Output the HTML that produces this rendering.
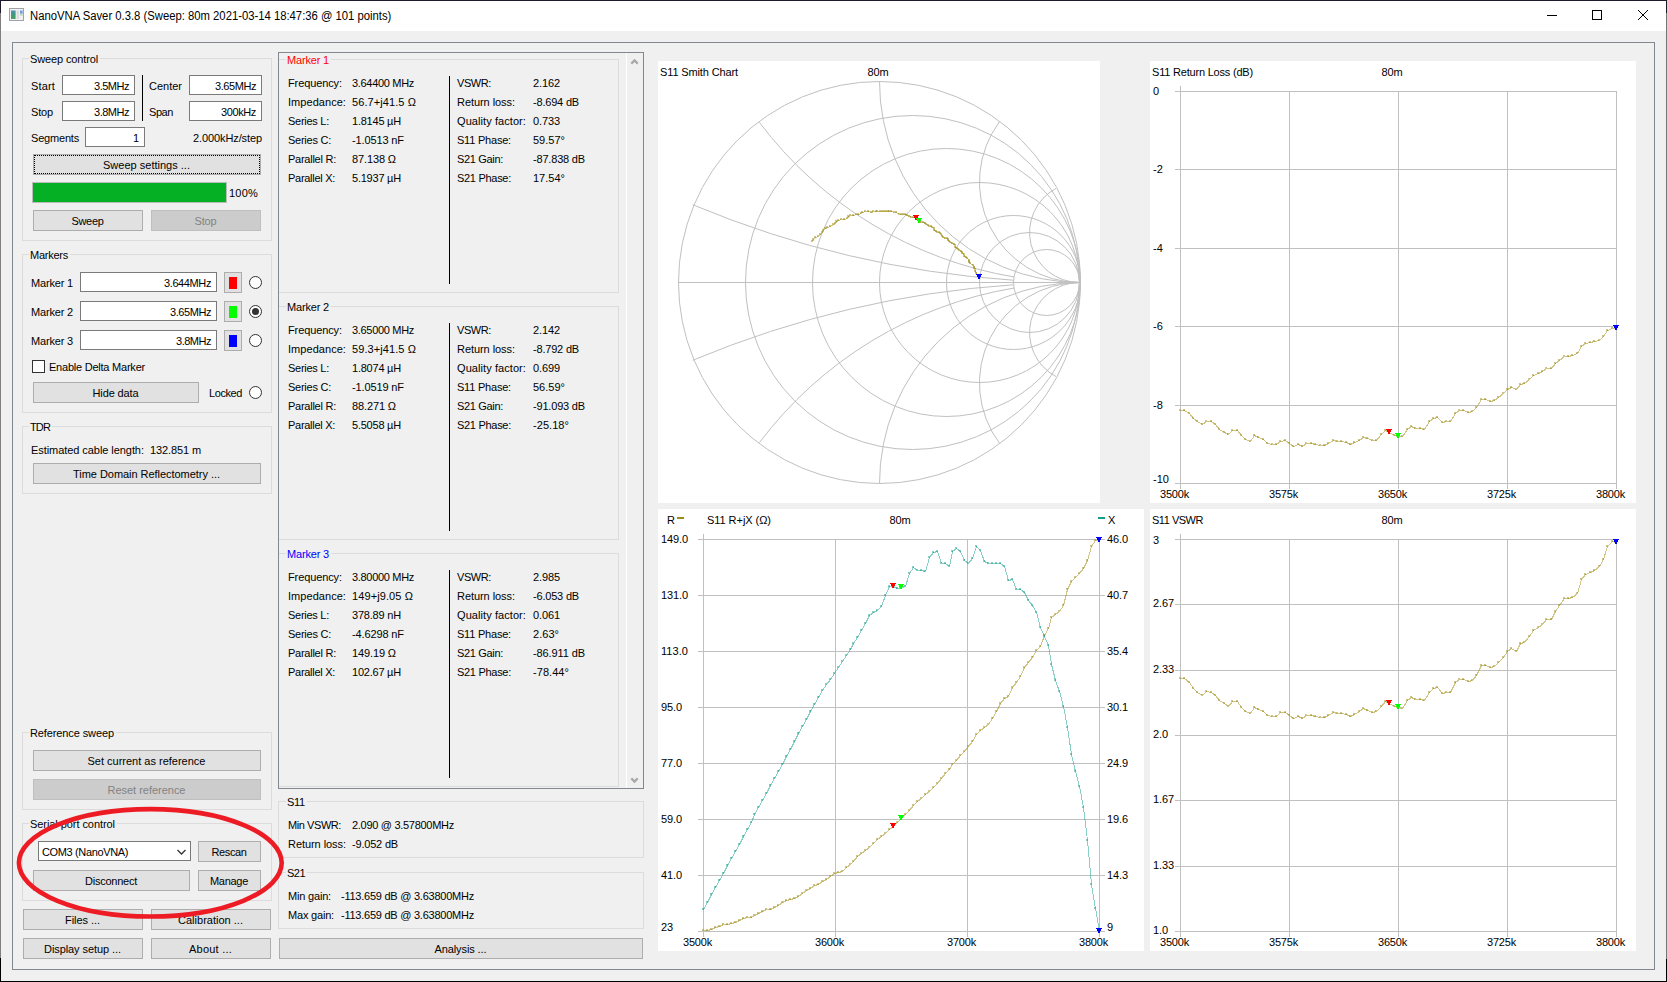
<!DOCTYPE html>
<html><head><meta charset="utf-8"><title>NanoVNA Saver</title><style>
html,body{margin:0;padding:0;}
body{width:1667px;height:982px;position:relative;overflow:hidden;background:#f0f0f0;font-family:'Liberation Sans',sans-serif;font-size:11px;color:#000;}
body div, body span, body svg{position:absolute;}
.t{line-height:14px;height:14px;white-space:pre;}
.gt{background:#f0f0f0;padding:0 2px 0 1px;}
.btn{box-sizing:border-box;text-align:center;white-space:pre;padding-right:1px;}
.inp{box-sizing:border-box;background:#fff;border:1px solid #7a7a7a;padding:0 5px 0 3px;white-space:pre;line-height:20px !important;}
.radio{width:13px;height:13px;box-sizing:border-box;border:1px solid #333;border-radius:50%;background:#fff;}
.radio i{position:absolute;left:2px;top:2px;width:7px;height:7px;border-radius:50%;background:#333;}
</style></head><body>
<div style="left:0px;top:0px;width:1667px;height:982px;background:#f0f0f0;"></div>
<div style="left:0px;top:1px;width:1667px;height:30px;background:#ffffff;"></div>
<div style="left:0px;top:0px;width:1667px;height:1px;background:#1b1b2b;"></div>
<div style="left:0px;top:0px;width:1px;height:958px;background:#7f7f7f;"></div>
<div style="left:0px;top:0px;width:1px;height:13px;background:#1b1b2b;"></div>
<div style="left:0px;top:958px;width:1px;height:24px;background:#000;"></div>
<div style="left:1666px;top:0px;width:1px;height:959px;background:#767676;"></div>
<div style="left:1666px;top:0px;width:1px;height:13px;background:#1b1b2b;"></div>
<div style="left:1666px;top:959px;width:1px;height:23px;background:#000;"></div>
<div style="left:0px;top:981px;width:1667px;height:1px;background:#000;"></div>
<svg style="left:9px;top:8px" width="15" height="13" viewBox="0 0 15 13"><defs><linearGradient id="ig" x1="0" y1="0" x2="0" y2="1"><stop offset="0" stop-color="#4f8fb0"/><stop offset="0.45" stop-color="#3f9a80"/><stop offset="1" stop-color="#4aa060"/></linearGradient></defs><rect x="0.5" y="0.5" width="14" height="12" fill="#f2f2f2" stroke="#9ea3ab"/><rect x="2" y="2.5" width="4.6" height="8.5" fill="url(#ig)"/><rect x="7.6" y="2.5" width="2.4" height="8.5" fill="#dcdcdc"/><rect x="11" y="2.5" width="2.6" height="3.2" fill="#6f9fd8"/><rect x="11" y="5.7" width="2.6" height="2" fill="#a8cfa8" opacity="0.7"/></svg>
<span class="t" style="left:30px;top:8px;font-size:12px;line-height:16px;transform-origin:0 0;transform:scaleX(0.94);">NanoVNA Saver 0.3.8 (Sweep: 80m 2021-03-14 18:47:36 @ 101 points)</span>
<svg style="left:1540px;top:0" width="127" height="31" viewBox="0 0 127 31" shape-rendering="crispEdges"><g stroke="#000" stroke-width="1" fill="none"><line x1="7" y1="15.5" x2="17" y2="15.5"/><rect x="52.5" y="10.5" width="9" height="9"/></g><g stroke="#000" stroke-width="1" shape-rendering="geometricPrecision"><line x1="98" y1="10" x2="108" y2="20"/><line x1="108" y1="10" x2="98" y2="20"/></g></svg>
<div style="left:12px;top:42px;width:1643px;height:928px;border:1px solid #828790;box-sizing:border-box;"></div>
<div style="left:22px;top:58px;width:250px;height:183px;border:1px solid #dcdcdc;box-sizing:border-box;"></div>
<span class="t gt" style="left:29px;top:52px;letter-spacing:-0.135px;">Sweep control</span>
<span class="t" style="top:79px;left:31px;letter-spacing:0.150px;">Start</span>
<div class="inp" style="left:62px;top:75px;width:73px;height:20px;line-height:20px;text-align:right;letter-spacing:-0.484px;">3.5MHz</div>
<span class="t" style="top:105px;left:31px;letter-spacing:-0.164px;">Stop</span>
<div class="inp" style="left:62px;top:101px;width:73px;height:20px;line-height:20px;text-align:right;letter-spacing:-0.484px;">3.8MHz</div>
<div style="left:142px;top:75px;width:1px;height:46px;background:#000;"></div>
<span class="t" style="top:79px;left:149px;letter-spacing:-0.005px;">Center</span>
<div class="inp" style="left:189px;top:75px;width:73px;height:20px;line-height:20px;text-align:right;letter-spacing:-0.433px;">3.65MHz</div>
<span class="t" style="top:105px;left:149px;letter-spacing:-0.430px;">Span</span>
<div class="inp" style="left:189px;top:101px;width:73px;height:20px;line-height:20px;text-align:right;letter-spacing:-0.385px;">300kHz</div>
<span class="t" style="top:131px;left:31px;letter-spacing:-0.195px;">Segments</span>
<div class="inp" style="left:85px;top:127px;width:60px;height:20px;line-height:20px;text-align:right;">1</div>
<span class="t" style="top:131px;right:1405px;letter-spacing:-0.106px;">2.000kHz/step</span>
<div class="btn" style="left:33px;top:154px;width:228px;height:21px;line-height:20px;letter-spacing:0.005px;background:#e1e1e1;border:1px solid #adadad;color:#000;"><div style="left:0;top:0;right:0;bottom:0;border:1px dotted #000;"></div>Sweep settings ...</div>
<div style="left:32px;top:182px;width:195px;height:21px;background:#06b025;border:1px solid #bcbcbc;box-sizing:border-box;"></div>
<span class="t" style="top:186px;left:229px;letter-spacing:0.211px;">100%</span>
<div class="btn" style="left:33px;top:210px;width:110px;height:21px;line-height:20px;letter-spacing:-0.331px;background:#e1e1e1;border:1px solid #adadad;color:#000;">Sweep</div>
<div class="btn" style="left:151px;top:210px;width:110px;height:21px;line-height:20px;letter-spacing:-0.164px;background:#cccccc;border:1px solid #bfbfbf;color:#838383;">Stop</div>
<div style="left:22px;top:254px;width:250px;height:159px;border:1px solid #dcdcdc;box-sizing:border-box;"></div>
<span class="t gt" style="left:29px;top:248px;letter-spacing:-0.246px;">Markers</span>
<span class="t" style="top:276px;left:31px;letter-spacing:-0.176px;">Marker 1</span>
<div class="inp" style="left:80px;top:272px;width:137px;height:20px;line-height:20px;text-align:right;letter-spacing:-0.395px;">3.644MHz</div>
<div style="left:224px;top:272px;width:18px;height:21px;background:#e1e1e1;border:1px solid #adadad;box-sizing:border-box;"></div>
<div style="left:229px;top:277px;width:8px;height:12px;background:#ff0000;"></div>
<div class="radio" style="left:249px;top:276px;"></div>
<span class="t" style="top:305px;left:31px;letter-spacing:-0.176px;">Marker 2</span>
<div class="inp" style="left:80px;top:301px;width:137px;height:20px;line-height:20px;text-align:right;letter-spacing:-0.433px;">3.65MHz</div>
<div style="left:224px;top:301px;width:18px;height:21px;background:#e1e1e1;border:1px solid #adadad;box-sizing:border-box;"></div>
<div style="left:229px;top:306px;width:8px;height:12px;background:#00ff00;"></div>
<div class="radio" style="left:249px;top:305px;"><i></i></div>
<span class="t" style="top:334px;left:31px;letter-spacing:-0.176px;">Marker 3</span>
<div class="inp" style="left:80px;top:330px;width:137px;height:20px;line-height:20px;text-align:right;letter-spacing:-0.484px;">3.8MHz</div>
<div style="left:224px;top:330px;width:18px;height:21px;background:#e1e1e1;border:1px solid #adadad;box-sizing:border-box;"></div>
<div style="left:229px;top:335px;width:8px;height:12px;background:#0000ff;"></div>
<div class="radio" style="left:249px;top:334px;"></div>
<div style="left:32px;top:360px;width:13px;height:13px;background:#fff;border:1px solid #333;box-sizing:border-box;"></div>
<span class="t" style="top:360px;left:49px;letter-spacing:-0.227px;">Enable Delta Marker</span>
<div class="btn" style="left:33px;top:382px;width:166px;height:21px;line-height:20px;letter-spacing:-0.125px;background:#e1e1e1;border:1px solid #adadad;color:#000;">Hide data</div>
<span class="t" style="top:386px;left:209px;letter-spacing:-0.417px;">Locked</span>
<div class="radio" style="left:249px;top:386px;"></div>
<div style="left:22px;top:426px;width:250px;height:68px;border:1px solid #dcdcdc;box-sizing:border-box;"></div>
<span class="t gt" style="left:29px;top:420px;letter-spacing:-0.865px;">TDR</span>
<span class="t" style="top:443px;left:31px;letter-spacing:-0.062px;">Estimated cable length:</span>
<span class="t" style="top:443px;left:150px;letter-spacing:-0.115px;">132.851 m</span>
<div class="btn" style="left:33px;top:463px;width:228px;height:21px;line-height:20px;letter-spacing:-0.041px;background:#e1e1e1;border:1px solid #adadad;color:#000;">Time Domain Reflectometry ...</div>
<div style="left:22px;top:732px;width:250px;height:78px;border:1px solid #dcdcdc;box-sizing:border-box;"></div>
<span class="t gt" style="left:29px;top:726px;letter-spacing:-0.110px;">Reference sweep</span>
<div class="btn" style="left:33px;top:750px;width:228px;height:21px;line-height:20px;letter-spacing:-0.004px;background:#e1e1e1;border:1px solid #adadad;color:#000;">Set current as reference</div>
<div class="btn" style="left:33px;top:779px;width:228px;height:21px;line-height:20px;letter-spacing:-0.021px;background:#cccccc;border:1px solid #bfbfbf;color:#838383;">Reset reference</div>
<div style="left:22px;top:823px;width:250px;height:78px;border:1px solid #dcdcdc;box-sizing:border-box;"></div>
<span class="t gt" style="left:29px;top:817px;letter-spacing:-0.066px;">Serial port control</span>
<div class="inp" style="left:38px;top:841px;width:153px;height:20px;line-height:20px;text-align:left;padding-left:3px;border-color:#7a7a7a;letter-spacing:-0.364px;">COM3 (NanoVNA)<svg style="right:4px;top:7px" width="9" height="7" viewBox="0 0 9 7"><path d="M0.5 1 L4.5 5 L8.5 1" fill="none" stroke="#333" stroke-width="1.25"/></svg></div>
<div class="btn" style="left:198px;top:841px;width:63px;height:21px;line-height:20px;letter-spacing:-0.385px;background:#e1e1e1;border:1px solid #adadad;color:#000;">Rescan</div>
<div class="btn" style="left:33px;top:870px;width:157px;height:21px;line-height:20px;letter-spacing:-0.244px;background:#e1e1e1;border:1px solid #adadad;color:#000;">Disconnect</div>
<div class="btn" style="left:198px;top:870px;width:63px;height:21px;line-height:20px;letter-spacing:-0.297px;background:#e1e1e1;border:1px solid #adadad;color:#000;">Manage</div>
<div class="btn" style="left:23px;top:909px;width:120px;height:21px;line-height:20px;letter-spacing:-0.052px;background:#e1e1e1;border:1px solid #adadad;color:#000;">Files ...</div>
<div class="btn" style="left:151px;top:909px;width:120px;height:21px;line-height:20px;letter-spacing:0.010px;background:#e1e1e1;border:1px solid #adadad;color:#000;">Calibration ...</div>
<div class="btn" style="left:23px;top:938px;width:120px;height:21px;line-height:20px;letter-spacing:-0.077px;background:#e1e1e1;border:1px solid #adadad;color:#000;">Display setup ...</div>
<div class="btn" style="left:151px;top:938px;width:120px;height:21px;line-height:20px;letter-spacing:0.219px;background:#e1e1e1;border:1px solid #adadad;color:#000;">About ...</div>
<div style="left:278px;top:52px;width:366px;height:737px;border:1px solid #828790;box-sizing:border-box;"></div>
<div style="left:279px;top:59px;width:340px;height:234px;border:1px solid #dcdcdc;border-left:none;box-sizing:border-box;"></div>
<span class="t gt" style="left:286px;top:53px;letter-spacing:-0.176px;color:#ff0000;">Marker 1</span>
<span class="t" style="top:76px;left:288px;letter-spacing:-0.106px;">Frequency:</span>
<span class="t" style="top:76px;left:352px;letter-spacing:-0.315px;">3.64400 MHz</span>
<span class="t" style="top:95px;left:288px;letter-spacing:0.047px;">Impedance:</span>
<span class="t" style="top:95px;left:352px;letter-spacing:0.082px;">56.7+j41.5 Ω</span>
<span class="t" style="top:114px;left:288px;letter-spacing:-0.271px;">Series L:</span>
<span class="t" style="top:114px;left:352px;letter-spacing:-0.226px;">1.8145 µH</span>
<span class="t" style="top:133px;left:288px;letter-spacing:-0.250px;">Series C:</span>
<span class="t" style="top:133px;left:352px;letter-spacing:-0.125px;">-1.0513 nF</span>
<span class="t" style="top:152px;left:288px;letter-spacing:-0.250px;">Parallel R:</span>
<span class="t" style="top:152px;left:352px;letter-spacing:-0.121px;">87.138 Ω</span>
<span class="t" style="top:171px;left:288px;letter-spacing:-0.287px;">Parallel X:</span>
<span class="t" style="top:171px;left:352px;letter-spacing:-0.226px;">5.1937 µH</span>
<span class="t" style="top:76px;left:457px;letter-spacing:-0.412px;">VSWR:</span>
<span class="t" style="top:76px;left:533px;letter-spacing:-0.113px;">2.162</span>
<span class="t" style="top:95px;left:457px;letter-spacing:-0.060px;">Return loss:</span>
<span class="t" style="top:95px;left:533px;letter-spacing:-0.194px;">-8.694 dB</span>
<span class="t" style="top:114px;left:457px;letter-spacing:0.073px;">Quality factor:</span>
<span class="t" style="top:114px;left:533px;letter-spacing:-0.113px;">0.733</span>
<span class="t" style="top:133px;left:457px;letter-spacing:-0.212px;">S11 Phase:</span>
<span class="t" style="top:133px;left:533px;letter-spacing:0.005px;">59.57°</span>
<span class="t" style="top:152px;left:457px;letter-spacing:-0.330px;">S21 Gain:</span>
<span class="t" style="top:152px;left:533px;letter-spacing:-0.188px;">-87.838 dB</span>
<span class="t" style="top:171px;left:457px;letter-spacing:-0.294px;">S21 Phase:</span>
<span class="t" style="top:171px;left:533px;letter-spacing:0.005px;">17.54°</span>
<div style="left:449px;top:76px;width:1px;height:208px;background:#000;"></div>
<div style="left:279px;top:306px;width:340px;height:234px;border:1px solid #dcdcdc;border-left:none;box-sizing:border-box;"></div>
<span class="t gt" style="left:286px;top:300px;letter-spacing:-0.176px;color:#000000;">Marker 2</span>
<span class="t" style="top:323px;left:288px;letter-spacing:-0.106px;">Frequency:</span>
<span class="t" style="top:323px;left:352px;letter-spacing:-0.315px;">3.65000 MHz</span>
<span class="t" style="top:342px;left:288px;letter-spacing:0.047px;">Impedance:</span>
<span class="t" style="top:342px;left:352px;letter-spacing:0.082px;">59.3+j41.5 Ω</span>
<span class="t" style="top:361px;left:288px;letter-spacing:-0.271px;">Series L:</span>
<span class="t" style="top:361px;left:352px;letter-spacing:-0.226px;">1.8074 µH</span>
<span class="t" style="top:380px;left:288px;letter-spacing:-0.250px;">Series C:</span>
<span class="t" style="top:380px;left:352px;letter-spacing:-0.125px;">-1.0519 nF</span>
<span class="t" style="top:399px;left:288px;letter-spacing:-0.250px;">Parallel R:</span>
<span class="t" style="top:399px;left:352px;letter-spacing:-0.121px;">88.271 Ω</span>
<span class="t" style="top:418px;left:288px;letter-spacing:-0.287px;">Parallel X:</span>
<span class="t" style="top:418px;left:352px;letter-spacing:-0.226px;">5.5058 µH</span>
<span class="t" style="top:323px;left:457px;letter-spacing:-0.412px;">VSWR:</span>
<span class="t" style="top:323px;left:533px;letter-spacing:-0.113px;">2.142</span>
<span class="t" style="top:342px;left:457px;letter-spacing:-0.060px;">Return loss:</span>
<span class="t" style="top:342px;left:533px;letter-spacing:-0.194px;">-8.792 dB</span>
<span class="t" style="top:361px;left:457px;letter-spacing:0.073px;">Quality factor:</span>
<span class="t" style="top:361px;left:533px;letter-spacing:-0.113px;">0.699</span>
<span class="t" style="top:380px;left:457px;letter-spacing:-0.212px;">S11 Phase:</span>
<span class="t" style="top:380px;left:533px;letter-spacing:0.005px;">56.59°</span>
<span class="t" style="top:399px;left:457px;letter-spacing:-0.330px;">S21 Gain:</span>
<span class="t" style="top:399px;left:533px;letter-spacing:-0.188px;">-91.093 dB</span>
<span class="t" style="top:418px;left:457px;letter-spacing:-0.294px;">S21 Phase:</span>
<span class="t" style="top:418px;left:533px;letter-spacing:0.054px;">-25.18°</span>
<div style="left:449px;top:323px;width:1px;height:208px;background:#000;"></div>
<div style="left:279px;top:553px;width:340px;height:234px;border:1px solid #dcdcdc;border-left:none;box-sizing:border-box;"></div>
<span class="t gt" style="left:286px;top:547px;letter-spacing:-0.176px;color:#0000ff;">Marker 3</span>
<span class="t" style="top:570px;left:288px;letter-spacing:-0.106px;">Frequency:</span>
<span class="t" style="top:570px;left:352px;letter-spacing:-0.315px;">3.80000 MHz</span>
<span class="t" style="top:589px;left:288px;letter-spacing:0.047px;">Impedance:</span>
<span class="t" style="top:589px;left:352px;letter-spacing:0.095px;">149+j9.05 Ω</span>
<span class="t" style="top:608px;left:288px;letter-spacing:-0.271px;">Series L:</span>
<span class="t" style="top:608px;left:352px;letter-spacing:-0.201px;">378.89 nH</span>
<span class="t" style="top:627px;left:288px;letter-spacing:-0.250px;">Series C:</span>
<span class="t" style="top:627px;left:352px;letter-spacing:-0.125px;">-4.6298 nF</span>
<span class="t" style="top:646px;left:288px;letter-spacing:-0.250px;">Parallel R:</span>
<span class="t" style="top:646px;left:352px;letter-spacing:-0.121px;">149.19 Ω</span>
<span class="t" style="top:665px;left:288px;letter-spacing:-0.287px;">Parallel X:</span>
<span class="t" style="top:665px;left:352px;letter-spacing:-0.226px;">102.67 µH</span>
<span class="t" style="top:570px;left:457px;letter-spacing:-0.412px;">VSWR:</span>
<span class="t" style="top:570px;left:533px;letter-spacing:-0.113px;">2.985</span>
<span class="t" style="top:589px;left:457px;letter-spacing:-0.060px;">Return loss:</span>
<span class="t" style="top:589px;left:533px;letter-spacing:-0.194px;">-6.053 dB</span>
<span class="t" style="top:608px;left:457px;letter-spacing:0.073px;">Quality factor:</span>
<span class="t" style="top:608px;left:533px;letter-spacing:-0.113px;">0.061</span>
<span class="t" style="top:627px;left:457px;letter-spacing:-0.212px;">S11 Phase:</span>
<span class="t" style="top:627px;left:533px;letter-spacing:0.031px;">2.63°</span>
<span class="t" style="top:646px;left:457px;letter-spacing:-0.330px;">S21 Gain:</span>
<span class="t" style="top:646px;left:533px;letter-spacing:-0.106px;">-86.911 dB</span>
<span class="t" style="top:665px;left:457px;letter-spacing:-0.294px;">S21 Phase:</span>
<span class="t" style="top:665px;left:533px;letter-spacing:0.054px;">-78.44°</span>
<div style="left:449px;top:570px;width:1px;height:208px;background:#000;"></div>
<div style="left:626px;top:53px;width:1px;height:735px;background:#ffffff;"></div>
<svg style="left:626px;top:53px" width="17" height="735" viewBox="0 0 17 735"><g fill="none" stroke="#a8a8a8" stroke-width="2.2"><path d="M5.3 10.6L8.5 7.4L11.7 10.6"/><path d="M5.3 725.4L8.5 728.6L11.7 725.4"/></g></svg>
<div style="left:278px;top:801px;width:366px;height:57px;border:1px solid #dcdcdc;box-sizing:border-box;"></div>
<span class="t gt" style="left:286px;top:795px;letter-spacing:-0.260px;">S11</span>
<span class="t" style="top:818px;left:288px;letter-spacing:-0.427px;">Min VSWR:</span>
<span class="t" style="top:818px;left:352px;letter-spacing:-0.293px;">2.090 @ 3.57800MHz</span>
<span class="t" style="top:837px;left:288px;letter-spacing:-0.060px;">Return loss:</span>
<span class="t" style="top:837px;left:352px;letter-spacing:-0.194px;">-9.052 dB</span>
<div style="left:278px;top:872px;width:366px;height:57px;border:1px solid #dcdcdc;box-sizing:border-box;"></div>
<span class="t gt" style="left:286px;top:866px;letter-spacing:-0.531px;">S21</span>
<span class="t" style="top:889px;left:288px;letter-spacing:-0.184px;">Min gain:</span>
<span class="t" style="top:889px;left:341px;letter-spacing:-0.245px;">-113.659 dB @ 3.63800MHz</span>
<span class="t" style="top:908px;left:288px;letter-spacing:-0.191px;">Max gain:</span>
<span class="t" style="top:908px;left:341px;letter-spacing:-0.245px;">-113.659 dB @ 3.63800MHz</span>
<div class="btn" style="left:279px;top:938px;width:364px;height:21px;line-height:20px;letter-spacing:-0.102px;background:#e1e1e1;border:1px solid #adadad;color:#000;">Analysis ...</div>
<svg style="left:658px;top:61px;background:#fff" width="442" height="442" viewBox="658 61 442 442">
<g fill="none" stroke="#c0c0c0" stroke-width="1"><circle cx="879.5" cy="282.5" r="201"/><line x1="678" y1="282.5" x2="1080" y2="282.5"/><circle cx="979.5" cy="282.5" r="100"/><circle cx="1013.5" cy="282.5" r="67"/><circle cx="1029.5" cy="282.5" r="50"/><circle cx="1046.5" cy="282.5" r="33"/><circle cx="946.5" cy="282.5" r="134"/><circle cx="912.5" cy="282.5" r="167"/><path d="M1079.5 282.5A50.0 50.0 0 0 0 1056.0 376.6"/><path d="M1079.5 282.5A50.0 50.0 0 0 1 1056.0 188.4"/><path d="M1080.0 282.5A100.5 100.5 0 0 0 999.7 443.5"/><path d="M1080.0 282.5A100.5 100.5 0 0 1 999.7 121.5"/><path d="M1080.5 282.5A201.0 201.0 0 0 0 879.5 483.5"/><path d="M1080.5 282.5A201.0 201.0 0 0 1 879.5 81.5"/><path d="M1014.2 288.0A402.0 402.0 0 0 0 759.4 442.6"/><path d="M1014.2 277.0A402.0 402.0 0 0 1 759.4 122.4"/><path d="M1013.0 284.8A1005.0 1005.0 0 0 0 692.7 360.3"/><path d="M1013.0 280.2A1005.0 1005.0 0 0 1 692.7 204.7"/></g>
<g stroke="rgba(160,140,20,0.5)" fill="rgba(160,140,20,0.5)" stroke-width="1" shape-rendering="crispEdges"><rect x="811" y="240" width="2" height="2" stroke="none"/><rect x="812" y="238" width="2" height="2" stroke="none"/><path d="M812.5 241.5L813.5 239.5" fill="none"/><rect x="814" y="236" width="2" height="2" stroke="none"/><path d="M813.5 239.5L815.5 237.5" fill="none"/><rect x="817" y="235" width="2" height="2" stroke="none"/><path d="M815.5 237.5L818.5 236.5" fill="none"/><rect x="819" y="233" width="2" height="2" stroke="none"/><path d="M818.5 236.5L820.5 234.5" fill="none"/><rect x="821" y="231" width="2" height="2" stroke="none"/><path d="M820.5 234.5L822.5 232.5" fill="none"/><rect x="822" y="229" width="2" height="2" stroke="none"/><path d="M822.5 232.5L823.5 230.5" fill="none"/><rect x="824" y="227" width="2" height="2" stroke="none"/><path d="M823.5 230.5L825.5 228.5" fill="none"/><rect x="826" y="226" width="2" height="2" stroke="none"/><path d="M825.5 228.5L827.5 227.5" fill="none"/><rect x="829" y="225" width="2" height="2" stroke="none"/><path d="M827.5 227.5L830.5 226.5" fill="none"/><rect x="832" y="223" width="2" height="2" stroke="none"/><path d="M830.5 226.5L833.5 224.5" fill="none"/><rect x="834" y="222" width="2" height="2" stroke="none"/><path d="M833.5 224.5L835.5 223.5" fill="none"/><rect x="835" y="220" width="2" height="2" stroke="none"/><path d="M835.5 223.5L836.5 221.5" fill="none"/><rect x="837" y="219" width="2" height="2" stroke="none"/><path d="M836.5 221.5L838.5 220.5" fill="none"/><rect x="840" y="218" width="2" height="2" stroke="none"/><path d="M838.5 220.5L841.5 219.5" fill="none"/><rect x="843" y="218" width="2" height="2" stroke="none"/><path d="M841.5 219.5L844.5 219.5" fill="none"/><rect x="846" y="217" width="2" height="2" stroke="none"/><path d="M844.5 219.5L847.5 218.5" fill="none"/><rect x="847" y="215" width="2" height="2" stroke="none"/><path d="M847.5 218.5L848.5 216.5" fill="none"/><rect x="849" y="214" width="2" height="2" stroke="none"/><path d="M848.5 216.5L850.5 215.5" fill="none"/><rect x="852" y="214" width="2" height="2" stroke="none"/><path d="M850.5 215.5L853.5 215.5" fill="none"/><rect x="855" y="213" width="2" height="2" stroke="none"/><path d="M853.5 215.5L856.5 214.5" fill="none"/><rect x="857" y="213" width="2" height="2" stroke="none"/><path d="M856.5 214.5L858.5 214.5" fill="none"/><rect x="860" y="212" width="2" height="2" stroke="none"/><path d="M858.5 214.5L861.5 213.5" fill="none"/><rect x="861" y="211" width="2" height="2" stroke="none"/><path d="M861.5 213.5L862.5 212.5" fill="none"/><rect x="864" y="210" width="2" height="2" stroke="none"/><path d="M862.5 212.5L865.5 211.5" fill="none"/><rect x="867" y="210" width="2" height="2" stroke="none"/><path d="M865.5 211.5L868.5 211.5" fill="none"/><rect x="870" y="211" width="2" height="2" stroke="none"/><path d="M868.5 211.5L871.5 212.5" fill="none"/><rect x="872" y="210" width="2" height="2" stroke="none"/><path d="M871.5 212.5L873.5 211.5" fill="none"/><rect x="875" y="210" width="2" height="2" stroke="none"/><path d="M873.5 211.5L876.5 211.5" fill="none"/><rect x="876" y="210" width="2" height="2" stroke="none"/><path d="M876.5 211.5L877.5 211.5" fill="none"/><rect x="879" y="210" width="2" height="2" stroke="none"/><path d="M877.5 211.5L880.5 211.5" fill="none"/><rect x="881" y="210" width="2" height="2" stroke="none"/><path d="M880.5 211.5L882.5 211.5" fill="none"/><rect x="883" y="210" width="2" height="2" stroke="none"/><path d="M882.5 211.5L884.5 211.5" fill="none"/><rect x="885" y="210" width="2" height="2" stroke="none"/><path d="M884.5 211.5L886.5 211.5" fill="none"/><rect x="887" y="210" width="2" height="2" stroke="none"/><path d="M886.5 211.5L888.5 211.5" fill="none"/><rect x="888" y="210" width="2" height="2" stroke="none"/><path d="M888.5 211.5L889.5 211.5" fill="none"/><rect x="890" y="210" width="2" height="2" stroke="none"/><path d="M889.5 211.5L891.5 211.5" fill="none"/><rect x="893" y="211" width="2" height="2" stroke="none"/><path d="M891.5 211.5L894.5 212.5" fill="none"/><rect x="895" y="211" width="2" height="2" stroke="none"/><path d="M894.5 212.5L896.5 212.5" fill="none"/><rect x="898" y="213" width="2" height="2" stroke="none"/><path d="M896.5 212.5L899.5 214.5" fill="none"/><rect x="900" y="213" width="2" height="2" stroke="none"/><path d="M899.5 214.5L901.5 214.5" fill="none"/><rect x="902" y="213" width="2" height="2" stroke="none"/><path d="M901.5 214.5L903.5 214.5" fill="none"/><rect x="904" y="213" width="2" height="2" stroke="none"/><path d="M903.5 214.5L905.5 214.5" fill="none"/><rect x="906" y="214" width="2" height="2" stroke="none"/><path d="M905.5 214.5L907.5 215.5" fill="none"/><rect x="908" y="215" width="2" height="2" stroke="none"/><path d="M907.5 215.5L909.5 216.5" fill="none"/><rect x="910" y="216" width="2" height="2" stroke="none"/><path d="M909.5 216.5L911.5 217.5" fill="none"/><rect x="912" y="216" width="2" height="2" stroke="none"/><path d="M911.5 217.5L913.5 217.5" fill="none"/><rect x="914" y="216" width="2" height="2" stroke="none"/><path d="M913.5 217.5L915.5 217.5" fill="none"/><rect x="915" y="217" width="2" height="2" stroke="none"/><path d="M915.5 217.5L916.5 218.5" fill="none"/><rect x="917" y="219" width="2" height="2" stroke="none"/><path d="M916.5 218.5L918.5 220.5" fill="none"/><rect x="918" y="220" width="2" height="2" stroke="none"/><path d="M918.5 220.5L919.5 221.5" fill="none"/><rect x="920" y="221" width="2" height="2" stroke="none"/><path d="M919.5 221.5L921.5 222.5" fill="none"/><rect x="922" y="221" width="2" height="2" stroke="none"/><path d="M921.5 222.5L923.5 222.5" fill="none"/><rect x="924" y="222" width="2" height="2" stroke="none"/><path d="M923.5 222.5L925.5 223.5" fill="none"/><rect x="925" y="223" width="2" height="2" stroke="none"/><path d="M925.5 223.5L926.5 224.5" fill="none"/><rect x="927" y="224" width="2" height="2" stroke="none"/><path d="M926.5 224.5L928.5 225.5" fill="none"/><rect x="928" y="225" width="2" height="2" stroke="none"/><path d="M928.5 225.5L929.5 226.5" fill="none"/><rect x="930" y="225" width="2" height="2" stroke="none"/><path d="M929.5 226.5L931.5 226.5" fill="none"/><rect x="931" y="226" width="2" height="2" stroke="none"/><path d="M931.5 226.5L932.5 227.5" fill="none"/><rect x="933" y="227" width="2" height="2" stroke="none"/><path d="M932.5 227.5L934.5 228.5" fill="none"/><rect x="933" y="229" width="2" height="2" stroke="none"/><path d="M934.5 228.5L934.5 230.5" fill="none"/><rect x="935" y="230" width="2" height="2" stroke="none"/><path d="M934.5 230.5L936.5 231.5" fill="none"/><rect x="936" y="231" width="2" height="2" stroke="none"/><path d="M936.5 231.5L937.5 232.5" fill="none"/><rect x="938" y="231" width="2" height="2" stroke="none"/><path d="M937.5 232.5L939.5 232.5" fill="none"/><rect x="939" y="232" width="2" height="2" stroke="none"/><path d="M939.5 232.5L940.5 233.5" fill="none"/><rect x="940" y="233" width="2" height="2" stroke="none"/><path d="M940.5 233.5L941.5 234.5" fill="none"/><rect x="941" y="235" width="2" height="2" stroke="none"/><path d="M941.5 234.5L942.5 236.5" fill="none"/><rect x="942" y="236" width="2" height="2" stroke="none"/><path d="M942.5 236.5L943.5 237.5" fill="none"/><rect x="944" y="237" width="2" height="2" stroke="none"/><path d="M943.5 237.5L945.5 238.5" fill="none"/><rect x="946" y="237" width="2" height="2" stroke="none"/><path d="M945.5 238.5L947.5 238.5" fill="none"/><rect x="947" y="238" width="2" height="2" stroke="none"/><path d="M947.5 238.5L948.5 239.5" fill="none"/><rect x="947" y="239" width="2" height="2" stroke="none"/><path d="M948.5 239.5L948.5 240.5" fill="none"/><rect x="948" y="240" width="2" height="2" stroke="none"/><path d="M948.5 240.5L949.5 241.5" fill="none"/><rect x="949" y="241" width="2" height="2" stroke="none"/><path d="M949.5 241.5L950.5 242.5" fill="none"/><rect x="951" y="242" width="2" height="2" stroke="none"/><path d="M950.5 242.5L952.5 243.5" fill="none"/><rect x="953" y="243" width="2" height="2" stroke="none"/><path d="M952.5 243.5L954.5 244.5" fill="none"/><rect x="954" y="244" width="2" height="2" stroke="none"/><path d="M954.5 244.5L955.5 245.5" fill="none"/><rect x="954" y="246" width="2" height="2" stroke="none"/><path d="M955.5 245.5L955.5 247.5" fill="none"/><rect x="956" y="247" width="2" height="2" stroke="none"/><path d="M955.5 247.5L957.5 248.5" fill="none"/><rect x="957" y="248" width="2" height="2" stroke="none"/><path d="M957.5 248.5L958.5 249.5" fill="none"/><rect x="958" y="249" width="2" height="2" stroke="none"/><path d="M958.5 249.5L959.5 250.5" fill="none"/><rect x="960" y="250" width="2" height="2" stroke="none"/><path d="M959.5 250.5L961.5 251.5" fill="none"/><rect x="961" y="251" width="2" height="2" stroke="none"/><path d="M961.5 251.5L962.5 252.5" fill="none"/><rect x="961" y="252" width="2" height="2" stroke="none"/><path d="M962.5 252.5L962.5 253.5" fill="none"/><rect x="963" y="253" width="2" height="2" stroke="none"/><path d="M962.5 253.5L964.5 254.5" fill="none"/><rect x="963" y="255" width="2" height="2" stroke="none"/><path d="M964.5 254.5L964.5 256.5" fill="none"/><rect x="965" y="256" width="2" height="2" stroke="none"/><path d="M964.5 256.5L966.5 257.5" fill="none"/><rect x="966" y="257" width="2" height="2" stroke="none"/><path d="M966.5 257.5L967.5 258.5" fill="none"/><rect x="968" y="259" width="2" height="2" stroke="none"/><path d="M967.5 258.5L969.5 260.5" fill="none"/><rect x="968" y="260" width="2" height="2" stroke="none"/><path d="M969.5 260.5L969.5 261.5" fill="none"/><rect x="968" y="261" width="2" height="2" stroke="none"/><path d="M969.5 261.5L969.5 262.5" fill="none"/><rect x="969" y="262" width="2" height="2" stroke="none"/><path d="M969.5 262.5L970.5 263.5" fill="none"/><rect x="972" y="264" width="2" height="2" stroke="none"/><path d="M970.5 263.5L973.5 265.5" fill="none"/><rect x="973" y="266" width="2" height="2" stroke="none"/><path d="M973.5 265.5L974.5 267.5" fill="none"/><rect x="973" y="267" width="2" height="2" stroke="none"/><path d="M974.5 267.5L974.5 268.5" fill="none"/><rect x="974" y="268" width="2" height="2" stroke="none"/><path d="M974.5 268.5L975.5 269.5" fill="none"/><rect x="974" y="270" width="2" height="2" stroke="none"/><path d="M975.5 269.5L975.5 271.5" fill="none"/><rect x="975" y="272" width="2" height="2" stroke="none"/><path d="M975.5 271.5L976.5 273.5" fill="none"/><rect x="977" y="274" width="2" height="2" stroke="none"/><path d="M976.5 273.5L978.5 275.5" fill="none"/><rect x="978" y="275" width="2" height="2" stroke="none"/><path d="M978.5 275.5L979.5 276.5" fill="none"/><rect x="978" y="276" width="2" height="2" stroke="none"/><path d="M979.5 276.5L979.5 277.5" fill="none"/></g>
<path d="M913 215h6v1h-1v2h-1v2h-2v-2h-1v-2h-1z" fill="#ff0000" shape-rendering="crispEdges"/>
<path d="M916 218h6v1h-1v2h-1v2h-2v-2h-1v-2h-1z" fill="#00ff00" shape-rendering="crispEdges"/>
<path d="M976 274h6v1h-1v2h-1v2h-2v-2h-1v-2h-1z" fill="#0000ff" shape-rendering="crispEdges"/>
</svg>
<span class="t" style="top:65px;left:660px;letter-spacing:-0.129px;">S11 Smith Chart</span>
<span class="t" style="top:65px;left:678px;width:400px;text-align:center;letter-spacing:-0.135px;">80m</span>
<svg style="left:1150px;top:61px;background:#fff" width="486" height="442" viewBox="1150 61 486 442">
<g stroke="#c0c0c0" stroke-width="1" shape-rendering="crispEdges"><line x1="1180.5" y1="86" x2="1180.5" y2="489"/><line x1="1289.5" y1="91" x2="1289.5" y2="489"/><line x1="1398.5" y1="91" x2="1398.5" y2="489"/><line x1="1507.5" y1="91" x2="1507.5" y2="489"/><line x1="1616.5" y1="91" x2="1616.5" y2="489"/><line x1="1175" y1="91.5" x2="1617" y2="91.5"/><line x1="1175" y1="169.5" x2="1617" y2="169.5"/><line x1="1175" y1="248.5" x2="1617" y2="248.5"/><line x1="1175" y1="326.5" x2="1617" y2="326.5"/><line x1="1175" y1="405.5" x2="1617" y2="405.5"/><line x1="1175" y1="483.5" x2="1617" y2="483.5"/></g>
<g stroke="rgba(160,140,20,0.5)" fill="rgba(160,140,20,0.5)" stroke-width="1" shape-rendering="crispEdges"><rect x="1179" y="409" width="2" height="2" stroke="none"/><rect x="1183" y="409" width="2" height="2" stroke="none"/><path d="M1180.5 410.5L1184.5 410.5" fill="none"/><rect x="1188" y="412" width="2" height="2" stroke="none"/><path d="M1184.5 410.5L1189.5 413.5" fill="none"/><rect x="1192" y="417" width="2" height="2" stroke="none"/><path d="M1189.5 413.5L1193.5 418.5" fill="none"/><rect x="1196" y="420" width="2" height="2" stroke="none"/><path d="M1193.5 418.5L1197.5 421.5" fill="none"/><rect x="1201" y="423" width="2" height="2" stroke="none"/><path d="M1197.5 421.5L1202.5 424.5" fill="none"/><rect x="1205" y="420" width="2" height="2" stroke="none"/><path d="M1202.5 424.5L1206.5 421.5" fill="none"/><rect x="1210" y="420" width="2" height="2" stroke="none"/><path d="M1206.5 421.5L1211.5 421.5" fill="none"/><rect x="1214" y="423" width="2" height="2" stroke="none"/><path d="M1211.5 421.5L1215.5 424.5" fill="none"/><rect x="1218" y="428" width="2" height="2" stroke="none"/><path d="M1215.5 424.5L1219.5 429.5" fill="none"/><rect x="1223" y="431" width="2" height="2" stroke="none"/><path d="M1219.5 429.5L1224.5 432.5" fill="none"/><rect x="1227" y="433" width="2" height="2" stroke="none"/><path d="M1224.5 432.5L1228.5 434.5" fill="none"/><rect x="1231" y="429" width="2" height="2" stroke="none"/><path d="M1228.5 434.5L1232.5 430.5" fill="none"/><rect x="1236" y="429" width="2" height="2" stroke="none"/><path d="M1232.5 430.5L1237.5 430.5" fill="none"/><rect x="1240" y="434" width="2" height="2" stroke="none"/><path d="M1237.5 430.5L1241.5 435.5" fill="none"/><rect x="1244" y="438" width="2" height="2" stroke="none"/><path d="M1241.5 435.5L1245.5 439.5" fill="none"/><rect x="1249" y="440" width="2" height="2" stroke="none"/><path d="M1245.5 439.5L1250.5 441.5" fill="none"/><rect x="1253" y="434" width="2" height="2" stroke="none"/><path d="M1250.5 441.5L1254.5 435.5" fill="none"/><rect x="1257" y="436" width="2" height="2" stroke="none"/><path d="M1254.5 435.5L1258.5 437.5" fill="none"/><rect x="1262" y="438" width="2" height="2" stroke="none"/><path d="M1258.5 437.5L1263.5 439.5" fill="none"/><rect x="1266" y="442" width="2" height="2" stroke="none"/><path d="M1263.5 439.5L1267.5 443.5" fill="none"/><rect x="1271" y="443" width="2" height="2" stroke="none"/><path d="M1267.5 443.5L1272.5 444.5" fill="none"/><rect x="1275" y="443" width="2" height="2" stroke="none"/><path d="M1272.5 444.5L1276.5 444.5" fill="none"/><rect x="1279" y="440" width="2" height="2" stroke="none"/><path d="M1276.5 444.5L1280.5 441.5" fill="none"/><rect x="1284" y="439" width="2" height="2" stroke="none"/><path d="M1280.5 441.5L1285.5 440.5" fill="none"/><rect x="1288" y="442" width="2" height="2" stroke="none"/><path d="M1285.5 440.5L1289.5 443.5" fill="none"/><rect x="1292" y="445" width="2" height="2" stroke="none"/><path d="M1289.5 443.5L1293.5 446.5" fill="none"/><rect x="1297" y="443" width="2" height="2" stroke="none"/><path d="M1293.5 446.5L1298.5 444.5" fill="none"/><rect x="1301" y="445" width="2" height="2" stroke="none"/><path d="M1298.5 444.5L1302.5 446.5" fill="none"/><rect x="1305" y="442" width="2" height="2" stroke="none"/><path d="M1302.5 446.5L1306.5 443.5" fill="none"/><rect x="1310" y="442" width="2" height="2" stroke="none"/><path d="M1306.5 443.5L1311.5 443.5" fill="none"/><rect x="1314" y="443" width="2" height="2" stroke="none"/><path d="M1311.5 443.5L1315.5 444.5" fill="none"/><rect x="1319" y="444" width="2" height="2" stroke="none"/><path d="M1315.5 444.5L1320.5 445.5" fill="none"/><rect x="1323" y="444" width="2" height="2" stroke="none"/><path d="M1320.5 445.5L1324.5 445.5" fill="none"/><rect x="1327" y="442" width="2" height="2" stroke="none"/><path d="M1324.5 445.5L1328.5 443.5" fill="none"/><rect x="1332" y="439" width="2" height="2" stroke="none"/><path d="M1328.5 443.5L1333.5 440.5" fill="none"/><rect x="1336" y="440" width="2" height="2" stroke="none"/><path d="M1333.5 440.5L1337.5 441.5" fill="none"/><rect x="1340" y="440" width="2" height="2" stroke="none"/><path d="M1337.5 441.5L1341.5 441.5" fill="none"/><rect x="1345" y="441" width="2" height="2" stroke="none"/><path d="M1341.5 441.5L1346.5 442.5" fill="none"/><rect x="1349" y="443" width="2" height="2" stroke="none"/><path d="M1346.5 442.5L1350.5 444.5" fill="none"/><rect x="1353" y="441" width="2" height="2" stroke="none"/><path d="M1350.5 444.5L1354.5 442.5" fill="none"/><rect x="1358" y="439" width="2" height="2" stroke="none"/><path d="M1354.5 442.5L1359.5 440.5" fill="none"/><rect x="1362" y="436" width="2" height="2" stroke="none"/><path d="M1359.5 440.5L1363.5 437.5" fill="none"/><rect x="1366" y="437" width="2" height="2" stroke="none"/><path d="M1363.5 437.5L1367.5 438.5" fill="none"/><rect x="1371" y="439" width="2" height="2" stroke="none"/><path d="M1367.5 438.5L1372.5 440.5" fill="none"/><rect x="1375" y="439" width="2" height="2" stroke="none"/><path d="M1372.5 440.5L1376.5 440.5" fill="none"/><rect x="1380" y="433" width="2" height="2" stroke="none"/><path d="M1376.5 440.5L1381.5 434.5" fill="none"/><rect x="1384" y="429" width="2" height="2" stroke="none"/><path d="M1381.5 434.5L1385.5 430.5" fill="none"/><rect x="1388" y="431" width="2" height="2" stroke="none"/><path d="M1385.5 430.5L1389.5 432.5" fill="none"/><rect x="1393" y="434" width="2" height="2" stroke="none"/><path d="M1389.5 432.5L1394.5 435.5" fill="none"/><rect x="1397" y="435" width="2" height="2" stroke="none"/><path d="M1394.5 435.5L1398.5 436.5" fill="none"/><rect x="1401" y="435" width="2" height="2" stroke="none"/><path d="M1398.5 436.5L1402.5 436.5" fill="none"/><rect x="1406" y="428" width="2" height="2" stroke="none"/><path d="M1402.5 436.5L1407.5 429.5" fill="none"/><rect x="1410" y="425" width="2" height="2" stroke="none"/><path d="M1407.5 429.5L1411.5 426.5" fill="none"/><rect x="1414" y="427" width="2" height="2" stroke="none"/><path d="M1411.5 426.5L1415.5 428.5" fill="none"/><rect x="1419" y="427" width="2" height="2" stroke="none"/><path d="M1415.5 428.5L1420.5 428.5" fill="none"/><rect x="1423" y="428" width="2" height="2" stroke="none"/><path d="M1420.5 428.5L1424.5 429.5" fill="none"/><rect x="1428" y="420" width="2" height="2" stroke="none"/><path d="M1424.5 429.5L1429.5 421.5" fill="none"/><rect x="1432" y="417" width="2" height="2" stroke="none"/><path d="M1429.5 421.5L1433.5 418.5" fill="none"/><rect x="1436" y="416" width="2" height="2" stroke="none"/><path d="M1433.5 418.5L1437.5 417.5" fill="none"/><rect x="1441" y="421" width="2" height="2" stroke="none"/><path d="M1437.5 417.5L1442.5 422.5" fill="none"/><rect x="1445" y="420" width="2" height="2" stroke="none"/><path d="M1442.5 422.5L1446.5 421.5" fill="none"/><rect x="1449" y="420" width="2" height="2" stroke="none"/><path d="M1446.5 421.5L1450.5 421.5" fill="none"/><rect x="1454" y="412" width="2" height="2" stroke="none"/><path d="M1450.5 421.5L1455.5 413.5" fill="none"/><rect x="1458" y="409" width="2" height="2" stroke="none"/><path d="M1455.5 413.5L1459.5 410.5" fill="none"/><rect x="1462" y="409" width="2" height="2" stroke="none"/><path d="M1459.5 410.5L1463.5 410.5" fill="none"/><rect x="1467" y="411" width="2" height="2" stroke="none"/><path d="M1463.5 410.5L1468.5 412.5" fill="none"/><rect x="1471" y="410" width="2" height="2" stroke="none"/><path d="M1468.5 412.5L1472.5 411.5" fill="none"/><rect x="1475" y="406" width="2" height="2" stroke="none"/><path d="M1472.5 411.5L1476.5 407.5" fill="none"/><rect x="1480" y="398" width="2" height="2" stroke="none"/><path d="M1476.5 407.5L1481.5 399.5" fill="none"/><rect x="1484" y="398" width="2" height="2" stroke="none"/><path d="M1481.5 399.5L1485.5 399.5" fill="none"/><rect x="1489" y="400" width="2" height="2" stroke="none"/><path d="M1485.5 399.5L1490.5 401.5" fill="none"/><rect x="1493" y="399" width="2" height="2" stroke="none"/><path d="M1490.5 401.5L1494.5 400.5" fill="none"/><rect x="1497" y="396" width="2" height="2" stroke="none"/><path d="M1494.5 400.5L1498.5 397.5" fill="none"/><rect x="1502" y="392" width="2" height="2" stroke="none"/><path d="M1498.5 397.5L1503.5 393.5" fill="none"/><rect x="1506" y="388" width="2" height="2" stroke="none"/><path d="M1503.5 393.5L1507.5 389.5" fill="none"/><rect x="1510" y="386" width="2" height="2" stroke="none"/><path d="M1507.5 389.5L1511.5 387.5" fill="none"/><rect x="1515" y="388" width="2" height="2" stroke="none"/><path d="M1511.5 387.5L1516.5 389.5" fill="none"/><rect x="1519" y="383" width="2" height="2" stroke="none"/><path d="M1516.5 389.5L1520.5 384.5" fill="none"/><rect x="1523" y="382" width="2" height="2" stroke="none"/><path d="M1520.5 384.5L1524.5 383.5" fill="none"/><rect x="1528" y="378" width="2" height="2" stroke="none"/><path d="M1524.5 383.5L1529.5 379.5" fill="none"/><rect x="1532" y="374" width="2" height="2" stroke="none"/><path d="M1529.5 379.5L1533.5 375.5" fill="none"/><rect x="1537" y="372" width="2" height="2" stroke="none"/><path d="M1533.5 375.5L1538.5 373.5" fill="none"/><rect x="1541" y="370" width="2" height="2" stroke="none"/><path d="M1538.5 373.5L1542.5 371.5" fill="none"/><rect x="1545" y="367" width="2" height="2" stroke="none"/><path d="M1542.5 371.5L1546.5 368.5" fill="none"/><rect x="1550" y="367" width="2" height="2" stroke="none"/><path d="M1546.5 368.5L1551.5 368.5" fill="none"/><rect x="1554" y="362" width="2" height="2" stroke="none"/><path d="M1551.5 368.5L1555.5 363.5" fill="none"/><rect x="1558" y="359" width="2" height="2" stroke="none"/><path d="M1555.5 363.5L1559.5 360.5" fill="none"/><rect x="1563" y="355" width="2" height="2" stroke="none"/><path d="M1559.5 360.5L1564.5 356.5" fill="none"/><rect x="1567" y="355" width="2" height="2" stroke="none"/><path d="M1564.5 356.5L1568.5 356.5" fill="none"/><rect x="1571" y="354" width="2" height="2" stroke="none"/><path d="M1568.5 356.5L1572.5 355.5" fill="none"/><rect x="1576" y="352" width="2" height="2" stroke="none"/><path d="M1572.5 355.5L1577.5 353.5" fill="none"/><rect x="1580" y="345" width="2" height="2" stroke="none"/><path d="M1577.5 353.5L1581.5 346.5" fill="none"/><rect x="1584" y="342" width="2" height="2" stroke="none"/><path d="M1581.5 346.5L1585.5 343.5" fill="none"/><rect x="1589" y="341" width="2" height="2" stroke="none"/><path d="M1585.5 343.5L1590.5 342.5" fill="none"/><rect x="1593" y="340" width="2" height="2" stroke="none"/><path d="M1590.5 342.5L1594.5 341.5" fill="none"/><rect x="1598" y="339" width="2" height="2" stroke="none"/><path d="M1594.5 341.5L1599.5 340.5" fill="none"/><rect x="1602" y="335" width="2" height="2" stroke="none"/><path d="M1599.5 340.5L1603.5 336.5" fill="none"/><rect x="1606" y="329" width="2" height="2" stroke="none"/><path d="M1603.5 336.5L1607.5 330.5" fill="none"/><rect x="1611" y="327" width="2" height="2" stroke="none"/><path d="M1607.5 330.5L1612.5 328.5" fill="none"/><rect x="1615" y="327" width="2" height="2" stroke="none"/><path d="M1612.5 328.5L1616.5 328.5" fill="none"/></g>
<path d="M1386 429h6v1h-1v2h-1v2h-2v-2h-1v-2h-1z" fill="#ff0000" shape-rendering="crispEdges"/>
<path d="M1395 433h6v1h-1v2h-1v2h-2v-2h-1v-2h-1z" fill="#00ff00" shape-rendering="crispEdges"/>
<path d="M1613 325h6v1h-1v2h-1v2h-2v-2h-1v-2h-1z" fill="#0000ff" shape-rendering="crispEdges"/>
</svg>
<span class="t" style="top:84px;left:1153px;">0</span>
<span class="t" style="top:162px;left:1153px;letter-spacing:0.109px;">-2</span>
<span class="t" style="top:241px;left:1153px;letter-spacing:0.109px;">-4</span>
<span class="t" style="top:319px;left:1153px;letter-spacing:0.109px;">-6</span>
<span class="t" style="top:398px;left:1153px;letter-spacing:0.109px;">-8</span>
<span class="t" style="top:472px;left:1153px;letter-spacing:0.031px;">-10</span>
<span class="t" style="top:487px;left:1160px;letter-spacing:-0.200px;">3500k</span>
<span class="t" style="top:487px;left:1269px;letter-spacing:-0.200px;">3575k</span>
<span class="t" style="top:487px;left:1378px;letter-spacing:-0.200px;">3650k</span>
<span class="t" style="top:487px;left:1487px;letter-spacing:-0.200px;">3725k</span>
<span class="t" style="top:487px;left:1596px;letter-spacing:-0.200px;">3800k</span>
<span class="t" style="top:65px;left:1152px;letter-spacing:-0.202px;">S11 Return Loss (dB)</span>
<span class="t" style="top:65px;left:1192px;width:400px;text-align:center;letter-spacing:-0.135px;">80m</span>
<svg style="left:658px;top:509px;background:#fff" width="486" height="442" viewBox="658 509 486 442">
<g stroke="#c0c0c0" stroke-width="1" shape-rendering="crispEdges"><line x1="703.5" y1="534" x2="703.5" y2="937"/><line x1="835.5" y1="539" x2="835.5" y2="937"/><line x1="967.5" y1="539" x2="967.5" y2="937"/><line x1="1099.5" y1="539" x2="1099.5" y2="937"/><line x1="698" y1="539.5" x2="1105" y2="539.5"/><line x1="698" y1="595.5" x2="1105" y2="595.5"/><line x1="698" y1="651.5" x2="1105" y2="651.5"/><line x1="698" y1="707.5" x2="1105" y2="707.5"/><line x1="698" y1="763.5" x2="1105" y2="763.5"/><line x1="698" y1="819.5" x2="1105" y2="819.5"/><line x1="698" y1="875.5" x2="1105" y2="875.5"/><line x1="698" y1="931.5" x2="1105" y2="931.5"/></g>
<g stroke="rgba(160,140,20,0.5)" fill="rgba(160,140,20,0.5)" stroke-width="1" shape-rendering="crispEdges"><rect x="702" y="929" width="2" height="2" stroke="none"/><rect x="706" y="929" width="2" height="2" stroke="none"/><path d="M703.5 930.5L707.5 930.5" fill="none"/><rect x="710" y="928" width="2" height="2" stroke="none"/><path d="M707.5 930.5L711.5 929.5" fill="none"/><rect x="714" y="926" width="2" height="2" stroke="none"/><path d="M711.5 929.5L715.5 927.5" fill="none"/><rect x="718" y="925" width="2" height="2" stroke="none"/><path d="M715.5 927.5L719.5 926.5" fill="none"/><rect x="722" y="923" width="2" height="2" stroke="none"/><path d="M719.5 926.5L723.5 924.5" fill="none"/><rect x="726" y="923" width="2" height="2" stroke="none"/><path d="M723.5 924.5L727.5 924.5" fill="none"/><rect x="730" y="922" width="2" height="2" stroke="none"/><path d="M727.5 924.5L731.5 923.5" fill="none"/><rect x="734" y="921" width="2" height="2" stroke="none"/><path d="M731.5 923.5L735.5 922.5" fill="none"/><rect x="738" y="919" width="2" height="2" stroke="none"/><path d="M735.5 922.5L739.5 920.5" fill="none"/><rect x="742" y="917" width="2" height="2" stroke="none"/><path d="M739.5 920.5L743.5 918.5" fill="none"/><rect x="746" y="916" width="2" height="2" stroke="none"/><path d="M743.5 918.5L747.5 917.5" fill="none"/><rect x="750" y="916" width="2" height="2" stroke="none"/><path d="M747.5 917.5L751.5 917.5" fill="none"/><rect x="753" y="914" width="2" height="2" stroke="none"/><path d="M751.5 917.5L754.5 915.5" fill="none"/><rect x="757" y="912" width="2" height="2" stroke="none"/><path d="M754.5 915.5L758.5 913.5" fill="none"/><rect x="761" y="910" width="2" height="2" stroke="none"/><path d="M758.5 913.5L762.5 911.5" fill="none"/><rect x="765" y="908" width="2" height="2" stroke="none"/><path d="M762.5 911.5L766.5 909.5" fill="none"/><rect x="769" y="908" width="2" height="2" stroke="none"/><path d="M766.5 909.5L770.5 909.5" fill="none"/><rect x="773" y="906" width="2" height="2" stroke="none"/><path d="M770.5 909.5L774.5 907.5" fill="none"/><rect x="777" y="904" width="2" height="2" stroke="none"/><path d="M774.5 907.5L778.5 905.5" fill="none"/><rect x="781" y="901" width="2" height="2" stroke="none"/><path d="M778.5 905.5L782.5 902.5" fill="none"/><rect x="785" y="899" width="2" height="2" stroke="none"/><path d="M782.5 902.5L786.5 900.5" fill="none"/><rect x="789" y="898" width="2" height="2" stroke="none"/><path d="M786.5 900.5L790.5 899.5" fill="none"/><rect x="793" y="897" width="2" height="2" stroke="none"/><path d="M790.5 899.5L794.5 898.5" fill="none"/><rect x="797" y="895" width="2" height="2" stroke="none"/><path d="M794.5 898.5L798.5 896.5" fill="none"/><rect x="801" y="892" width="2" height="2" stroke="none"/><path d="M798.5 896.5L802.5 893.5" fill="none"/><rect x="805" y="889" width="2" height="2" stroke="none"/><path d="M802.5 893.5L806.5 890.5" fill="none"/><rect x="809" y="887" width="2" height="2" stroke="none"/><path d="M806.5 890.5L810.5 888.5" fill="none"/><rect x="813" y="884" width="2" height="2" stroke="none"/><path d="M810.5 888.5L814.5 885.5" fill="none"/><rect x="817" y="883" width="2" height="2" stroke="none"/><path d="M814.5 885.5L818.5 884.5" fill="none"/><rect x="821" y="880" width="2" height="2" stroke="none"/><path d="M818.5 884.5L822.5 881.5" fill="none"/><rect x="825" y="878" width="2" height="2" stroke="none"/><path d="M822.5 881.5L826.5 879.5" fill="none"/><rect x="829" y="875" width="2" height="2" stroke="none"/><path d="M826.5 879.5L830.5 876.5" fill="none"/><rect x="833" y="872" width="2" height="2" stroke="none"/><path d="M830.5 876.5L834.5 873.5" fill="none"/><rect x="837" y="871" width="2" height="2" stroke="none"/><path d="M834.5 873.5L838.5 872.5" fill="none"/><rect x="841" y="870" width="2" height="2" stroke="none"/><path d="M838.5 872.5L842.5 871.5" fill="none"/><rect x="845" y="866" width="2" height="2" stroke="none"/><path d="M842.5 871.5L846.5 867.5" fill="none"/><rect x="849" y="863" width="2" height="2" stroke="none"/><path d="M846.5 867.5L850.5 864.5" fill="none"/><rect x="852" y="860" width="2" height="2" stroke="none"/><path d="M850.5 864.5L853.5 861.5" fill="none"/><rect x="856" y="855" width="2" height="2" stroke="none"/><path d="M853.5 861.5L857.5 856.5" fill="none"/><rect x="860" y="852" width="2" height="2" stroke="none"/><path d="M857.5 856.5L861.5 853.5" fill="none"/><rect x="864" y="849" width="2" height="2" stroke="none"/><path d="M861.5 853.5L865.5 850.5" fill="none"/><rect x="868" y="846" width="2" height="2" stroke="none"/><path d="M865.5 850.5L869.5 847.5" fill="none"/><rect x="872" y="842" width="2" height="2" stroke="none"/><path d="M869.5 847.5L873.5 843.5" fill="none"/><rect x="876" y="838" width="2" height="2" stroke="none"/><path d="M873.5 843.5L877.5 839.5" fill="none"/><rect x="880" y="835" width="2" height="2" stroke="none"/><path d="M877.5 839.5L881.5 836.5" fill="none"/><rect x="884" y="832" width="2" height="2" stroke="none"/><path d="M881.5 836.5L885.5 833.5" fill="none"/><rect x="888" y="828" width="2" height="2" stroke="none"/><path d="M885.5 833.5L889.5 829.5" fill="none"/><rect x="892" y="825" width="2" height="2" stroke="none"/><path d="M889.5 829.5L893.5 826.5" fill="none"/><rect x="896" y="821" width="2" height="2" stroke="none"/><path d="M893.5 826.5L897.5 822.5" fill="none"/><rect x="900" y="817" width="2" height="2" stroke="none"/><path d="M897.5 822.5L901.5 818.5" fill="none"/><rect x="904" y="813" width="2" height="2" stroke="none"/><path d="M901.5 818.5L905.5 814.5" fill="none"/><rect x="908" y="809" width="2" height="2" stroke="none"/><path d="M905.5 814.5L909.5 810.5" fill="none"/><rect x="912" y="804" width="2" height="2" stroke="none"/><path d="M909.5 810.5L913.5 805.5" fill="none"/><rect x="916" y="800" width="2" height="2" stroke="none"/><path d="M913.5 805.5L917.5 801.5" fill="none"/><rect x="920" y="797" width="2" height="2" stroke="none"/><path d="M917.5 801.5L921.5 798.5" fill="none"/><rect x="924" y="793" width="2" height="2" stroke="none"/><path d="M921.5 798.5L925.5 794.5" fill="none"/><rect x="928" y="790" width="2" height="2" stroke="none"/><path d="M925.5 794.5L929.5 791.5" fill="none"/><rect x="932" y="786" width="2" height="2" stroke="none"/><path d="M929.5 791.5L933.5 787.5" fill="none"/><rect x="936" y="782" width="2" height="2" stroke="none"/><path d="M933.5 787.5L937.5 783.5" fill="none"/><rect x="940" y="777" width="2" height="2" stroke="none"/><path d="M937.5 783.5L941.5 778.5" fill="none"/><rect x="944" y="772" width="2" height="2" stroke="none"/><path d="M941.5 778.5L945.5 773.5" fill="none"/><rect x="948" y="768" width="2" height="2" stroke="none"/><path d="M945.5 773.5L949.5 769.5" fill="none"/><rect x="951" y="763" width="2" height="2" stroke="none"/><path d="M949.5 769.5L952.5 764.5" fill="none"/><rect x="955" y="759" width="2" height="2" stroke="none"/><path d="M952.5 764.5L956.5 760.5" fill="none"/><rect x="959" y="754" width="2" height="2" stroke="none"/><path d="M956.5 760.5L960.5 755.5" fill="none"/><rect x="963" y="750" width="2" height="2" stroke="none"/><path d="M960.5 755.5L964.5 751.5" fill="none"/><rect x="967" y="745" width="2" height="2" stroke="none"/><path d="M964.5 751.5L968.5 746.5" fill="none"/><rect x="971" y="740" width="2" height="2" stroke="none"/><path d="M968.5 746.5L972.5 741.5" fill="none"/><rect x="975" y="733" width="2" height="2" stroke="none"/><path d="M972.5 741.5L976.5 734.5" fill="none"/><rect x="979" y="729" width="2" height="2" stroke="none"/><path d="M976.5 734.5L980.5 730.5" fill="none"/><rect x="983" y="726" width="2" height="2" stroke="none"/><path d="M980.5 730.5L984.5 727.5" fill="none"/><rect x="987" y="723" width="2" height="2" stroke="none"/><path d="M984.5 727.5L988.5 724.5" fill="none"/><rect x="991" y="717" width="2" height="2" stroke="none"/><path d="M988.5 724.5L992.5 718.5" fill="none"/><rect x="995" y="710" width="2" height="2" stroke="none"/><path d="M992.5 718.5L996.5 711.5" fill="none"/><rect x="999" y="702" width="2" height="2" stroke="none"/><path d="M996.5 711.5L1000.5 703.5" fill="none"/><rect x="1003" y="697" width="2" height="2" stroke="none"/><path d="M1000.5 703.5L1004.5 698.5" fill="none"/><rect x="1007" y="695" width="2" height="2" stroke="none"/><path d="M1004.5 698.5L1008.5 696.5" fill="none"/><rect x="1011" y="686" width="2" height="2" stroke="none"/><path d="M1008.5 696.5L1012.5 687.5" fill="none"/><rect x="1015" y="681" width="2" height="2" stroke="none"/><path d="M1012.5 687.5L1016.5 682.5" fill="none"/><rect x="1019" y="675" width="2" height="2" stroke="none"/><path d="M1016.5 682.5L1020.5 676.5" fill="none"/><rect x="1023" y="666" width="2" height="2" stroke="none"/><path d="M1020.5 676.5L1024.5 667.5" fill="none"/><rect x="1027" y="661" width="2" height="2" stroke="none"/><path d="M1024.5 667.5L1028.5 662.5" fill="none"/><rect x="1031" y="656" width="2" height="2" stroke="none"/><path d="M1028.5 662.5L1032.5 657.5" fill="none"/><rect x="1035" y="649" width="2" height="2" stroke="none"/><path d="M1032.5 657.5L1036.5 650.5" fill="none"/><rect x="1039" y="645" width="2" height="2" stroke="none"/><path d="M1036.5 650.5L1040.5 646.5" fill="none"/><rect x="1043" y="634" width="2" height="2" stroke="none"/><path d="M1040.5 646.5L1044.5 635.5" fill="none"/><rect x="1047" y="627" width="2" height="2" stroke="none"/><path d="M1044.5 635.5L1048.5 628.5" fill="none"/><rect x="1050" y="616" width="2" height="2" stroke="none"/><path d="M1048.5 628.5L1051.5 617.5" fill="none"/><rect x="1054" y="613" width="2" height="2" stroke="none"/><path d="M1051.5 617.5L1055.5 614.5" fill="none"/><rect x="1058" y="610" width="2" height="2" stroke="none"/><path d="M1055.5 614.5L1059.5 611.5" fill="none"/><rect x="1062" y="604" width="2" height="2" stroke="none"/><path d="M1059.5 611.5L1063.5 605.5" fill="none"/><rect x="1066" y="588" width="2" height="2" stroke="none"/><path d="M1063.5 605.5L1067.5 589.5" fill="none"/><rect x="1070" y="580" width="2" height="2" stroke="none"/><path d="M1067.5 589.5L1071.5 581.5" fill="none"/><rect x="1074" y="576" width="2" height="2" stroke="none"/><path d="M1071.5 581.5L1075.5 577.5" fill="none"/><rect x="1078" y="572" width="2" height="2" stroke="none"/><path d="M1075.5 577.5L1079.5 573.5" fill="none"/><rect x="1082" y="567" width="2" height="2" stroke="none"/><path d="M1079.5 573.5L1083.5 568.5" fill="none"/><rect x="1086" y="559" width="2" height="2" stroke="none"/><path d="M1083.5 568.5L1087.5 560.5" fill="none"/><rect x="1090" y="545" width="2" height="2" stroke="none"/><path d="M1087.5 560.5L1091.5 546.5" fill="none"/><rect x="1094" y="539" width="2" height="2" stroke="none"/><path d="M1091.5 546.5L1095.5 540.5" fill="none"/><rect x="1098" y="539" width="2" height="2" stroke="none"/><path d="M1095.5 540.5L1099.5 540.5" fill="none"/></g>
<g stroke="rgba(20,160,140,0.5)" fill="rgba(20,160,140,0.5)" stroke-width="1" shape-rendering="crispEdges"><rect x="702" y="908" width="2" height="2" stroke="none"/><rect x="706" y="901" width="2" height="2" stroke="none"/><path d="M703.5 909.5L707.5 902.5" fill="none"/><rect x="710" y="893" width="2" height="2" stroke="none"/><path d="M707.5 902.5L711.5 894.5" fill="none"/><rect x="714" y="886" width="2" height="2" stroke="none"/><path d="M711.5 894.5L715.5 887.5" fill="none"/><rect x="718" y="879" width="2" height="2" stroke="none"/><path d="M715.5 887.5L719.5 880.5" fill="none"/><rect x="722" y="872" width="2" height="2" stroke="none"/><path d="M719.5 880.5L723.5 873.5" fill="none"/><rect x="726" y="864" width="2" height="2" stroke="none"/><path d="M723.5 873.5L727.5 865.5" fill="none"/><rect x="730" y="857" width="2" height="2" stroke="none"/><path d="M727.5 865.5L731.5 858.5" fill="none"/><rect x="734" y="850" width="2" height="2" stroke="none"/><path d="M731.5 858.5L735.5 851.5" fill="none"/><rect x="738" y="843" width="2" height="2" stroke="none"/><path d="M735.5 851.5L739.5 844.5" fill="none"/><rect x="742" y="835" width="2" height="2" stroke="none"/><path d="M739.5 844.5L743.5 836.5" fill="none"/><rect x="746" y="828" width="2" height="2" stroke="none"/><path d="M743.5 836.5L747.5 829.5" fill="none"/><rect x="750" y="821" width="2" height="2" stroke="none"/><path d="M747.5 829.5L751.5 822.5" fill="none"/><rect x="753" y="813" width="2" height="2" stroke="none"/><path d="M751.5 822.5L754.5 814.5" fill="none"/><rect x="757" y="806" width="2" height="2" stroke="none"/><path d="M754.5 814.5L758.5 807.5" fill="none"/><rect x="761" y="799" width="2" height="2" stroke="none"/><path d="M758.5 807.5L762.5 800.5" fill="none"/><rect x="765" y="792" width="2" height="2" stroke="none"/><path d="M762.5 800.5L766.5 793.5" fill="none"/><rect x="769" y="784" width="2" height="2" stroke="none"/><path d="M766.5 793.5L770.5 785.5" fill="none"/><rect x="773" y="777" width="2" height="2" stroke="none"/><path d="M770.5 785.5L774.5 778.5" fill="none"/><rect x="777" y="770" width="2" height="2" stroke="none"/><path d="M774.5 778.5L778.5 771.5" fill="none"/><rect x="781" y="763" width="2" height="2" stroke="none"/><path d="M778.5 771.5L782.5 764.5" fill="none"/><rect x="785" y="755" width="2" height="2" stroke="none"/><path d="M782.5 764.5L786.5 756.5" fill="none"/><rect x="789" y="748" width="2" height="2" stroke="none"/><path d="M786.5 756.5L790.5 749.5" fill="none"/><rect x="793" y="740" width="2" height="2" stroke="none"/><path d="M790.5 749.5L794.5 741.5" fill="none"/><rect x="797" y="732" width="2" height="2" stroke="none"/><path d="M794.5 741.5L798.5 733.5" fill="none"/><rect x="801" y="725" width="2" height="2" stroke="none"/><path d="M798.5 733.5L802.5 726.5" fill="none"/><rect x="805" y="718" width="2" height="2" stroke="none"/><path d="M802.5 726.5L806.5 719.5" fill="none"/><rect x="809" y="710" width="2" height="2" stroke="none"/><path d="M806.5 719.5L810.5 711.5" fill="none"/><rect x="813" y="703" width="2" height="2" stroke="none"/><path d="M810.5 711.5L814.5 704.5" fill="none"/><rect x="817" y="696" width="2" height="2" stroke="none"/><path d="M814.5 704.5L818.5 697.5" fill="none"/><rect x="821" y="689" width="2" height="2" stroke="none"/><path d="M818.5 697.5L822.5 690.5" fill="none"/><rect x="825" y="683" width="2" height="2" stroke="none"/><path d="M822.5 690.5L826.5 684.5" fill="none"/><rect x="829" y="678" width="2" height="2" stroke="none"/><path d="M826.5 684.5L830.5 679.5" fill="none"/><rect x="833" y="672" width="2" height="2" stroke="none"/><path d="M830.5 679.5L834.5 673.5" fill="none"/><rect x="837" y="666" width="2" height="2" stroke="none"/><path d="M834.5 673.5L838.5 667.5" fill="none"/><rect x="841" y="660" width="2" height="2" stroke="none"/><path d="M838.5 667.5L842.5 661.5" fill="none"/><rect x="845" y="654" width="2" height="2" stroke="none"/><path d="M842.5 661.5L846.5 655.5" fill="none"/><rect x="849" y="648" width="2" height="2" stroke="none"/><path d="M846.5 655.5L850.5 649.5" fill="none"/><rect x="852" y="642" width="2" height="2" stroke="none"/><path d="M850.5 649.5L853.5 643.5" fill="none"/><rect x="856" y="636" width="2" height="2" stroke="none"/><path d="M853.5 643.5L857.5 637.5" fill="none"/><rect x="860" y="629" width="2" height="2" stroke="none"/><path d="M857.5 637.5L861.5 630.5" fill="none"/><rect x="864" y="622" width="2" height="2" stroke="none"/><path d="M861.5 630.5L865.5 623.5" fill="none"/><rect x="868" y="614" width="2" height="2" stroke="none"/><path d="M865.5 623.5L869.5 615.5" fill="none"/><rect x="872" y="611" width="2" height="2" stroke="none"/><path d="M869.5 615.5L873.5 612.5" fill="none"/><rect x="876" y="609" width="2" height="2" stroke="none"/><path d="M873.5 612.5L877.5 610.5" fill="none"/><rect x="880" y="605" width="2" height="2" stroke="none"/><path d="M877.5 610.5L881.5 606.5" fill="none"/><rect x="884" y="594" width="2" height="2" stroke="none"/><path d="M881.5 606.5L885.5 595.5" fill="none"/><rect x="888" y="585" width="2" height="2" stroke="none"/><path d="M885.5 595.5L889.5 586.5" fill="none"/><rect x="892" y="585" width="2" height="2" stroke="none"/><path d="M889.5 586.5L893.5 586.5" fill="none"/><rect x="896" y="587" width="2" height="2" stroke="none"/><path d="M893.5 586.5L897.5 588.5" fill="none"/><rect x="900" y="586" width="2" height="2" stroke="none"/><path d="M897.5 588.5L901.5 587.5" fill="none"/><rect x="904" y="585" width="2" height="2" stroke="none"/><path d="M901.5 587.5L905.5 586.5" fill="none"/><rect x="908" y="572" width="2" height="2" stroke="none"/><path d="M905.5 586.5L909.5 573.5" fill="none"/><rect x="912" y="566" width="2" height="2" stroke="none"/><path d="M909.5 573.5L913.5 567.5" fill="none"/><rect x="916" y="569" width="2" height="2" stroke="none"/><path d="M913.5 567.5L917.5 570.5" fill="none"/><rect x="920" y="569" width="2" height="2" stroke="none"/><path d="M917.5 570.5L921.5 570.5" fill="none"/><rect x="924" y="570" width="2" height="2" stroke="none"/><path d="M921.5 570.5L925.5 571.5" fill="none"/><rect x="928" y="556" width="2" height="2" stroke="none"/><path d="M925.5 571.5L929.5 557.5" fill="none"/><rect x="932" y="551" width="2" height="2" stroke="none"/><path d="M929.5 557.5L933.5 552.5" fill="none"/><rect x="936" y="550" width="2" height="2" stroke="none"/><path d="M933.5 552.5L937.5 551.5" fill="none"/><rect x="940" y="562" width="2" height="2" stroke="none"/><path d="M937.5 551.5L941.5 563.5" fill="none"/><rect x="944" y="562" width="2" height="2" stroke="none"/><path d="M941.5 563.5L945.5 563.5" fill="none"/><rect x="948" y="565" width="2" height="2" stroke="none"/><path d="M945.5 563.5L949.5 566.5" fill="none"/><rect x="951" y="550" width="2" height="2" stroke="none"/><path d="M949.5 566.5L952.5 551.5" fill="none"/><rect x="955" y="547" width="2" height="2" stroke="none"/><path d="M952.5 551.5L956.5 548.5" fill="none"/><rect x="959" y="550" width="2" height="2" stroke="none"/><path d="M956.5 548.5L960.5 551.5" fill="none"/><rect x="963" y="559" width="2" height="2" stroke="none"/><path d="M960.5 551.5L964.5 560.5" fill="none"/><rect x="967" y="562" width="2" height="2" stroke="none"/><path d="M964.5 560.5L968.5 563.5" fill="none"/><rect x="971" y="557" width="2" height="2" stroke="none"/><path d="M968.5 563.5L972.5 558.5" fill="none"/><rect x="975" y="545" width="2" height="2" stroke="none"/><path d="M972.5 558.5L976.5 546.5" fill="none"/><rect x="979" y="549" width="2" height="2" stroke="none"/><path d="M976.5 546.5L980.5 550.5" fill="none"/><rect x="983" y="560" width="2" height="2" stroke="none"/><path d="M980.5 550.5L984.5 561.5" fill="none"/><rect x="987" y="562" width="2" height="2" stroke="none"/><path d="M984.5 561.5L988.5 563.5" fill="none"/><rect x="991" y="562" width="2" height="2" stroke="none"/><path d="M988.5 563.5L992.5 563.5" fill="none"/><rect x="995" y="562" width="2" height="2" stroke="none"/><path d="M992.5 563.5L996.5 563.5" fill="none"/><rect x="999" y="562" width="2" height="2" stroke="none"/><path d="M996.5 563.5L1000.5 563.5" fill="none"/><rect x="1003" y="565" width="2" height="2" stroke="none"/><path d="M1000.5 563.5L1004.5 566.5" fill="none"/><rect x="1007" y="579" width="2" height="2" stroke="none"/><path d="M1004.5 566.5L1008.5 580.5" fill="none"/><rect x="1011" y="578" width="2" height="2" stroke="none"/><path d="M1008.5 580.5L1012.5 579.5" fill="none"/><rect x="1015" y="588" width="2" height="2" stroke="none"/><path d="M1012.5 579.5L1016.5 589.5" fill="none"/><rect x="1019" y="588" width="2" height="2" stroke="none"/><path d="M1016.5 589.5L1020.5 589.5" fill="none"/><rect x="1023" y="591" width="2" height="2" stroke="none"/><path d="M1020.5 589.5L1024.5 592.5" fill="none"/><rect x="1027" y="599" width="2" height="2" stroke="none"/><path d="M1024.5 592.5L1028.5 600.5" fill="none"/><rect x="1031" y="604" width="2" height="2" stroke="none"/><path d="M1028.5 600.5L1032.5 605.5" fill="none"/><rect x="1035" y="611" width="2" height="2" stroke="none"/><path d="M1032.5 605.5L1036.5 612.5" fill="none"/><rect x="1039" y="626" width="2" height="2" stroke="none"/><path d="M1036.5 612.5L1040.5 627.5" fill="none"/><rect x="1043" y="635" width="2" height="2" stroke="none"/><path d="M1040.5 627.5L1044.5 636.5" fill="none"/><rect x="1047" y="644" width="2" height="2" stroke="none"/><path d="M1044.5 636.5L1048.5 645.5" fill="none"/><rect x="1050" y="663" width="2" height="2" stroke="none"/><path d="M1048.5 645.5L1051.5 664.5" fill="none"/><rect x="1054" y="679" width="2" height="2" stroke="none"/><path d="M1051.5 664.5L1055.5 680.5" fill="none"/><rect x="1058" y="690" width="2" height="2" stroke="none"/><path d="M1055.5 680.5L1059.5 691.5" fill="none"/><rect x="1062" y="705" width="2" height="2" stroke="none"/><path d="M1059.5 691.5L1063.5 706.5" fill="none"/><rect x="1066" y="726" width="2" height="2" stroke="none"/><path d="M1063.5 706.5L1067.5 727.5" fill="none"/><rect x="1070" y="753" width="2" height="2" stroke="none"/><path d="M1067.5 727.5L1071.5 754.5" fill="none"/><rect x="1074" y="770" width="2" height="2" stroke="none"/><path d="M1071.5 754.5L1075.5 771.5" fill="none"/><rect x="1078" y="785" width="2" height="2" stroke="none"/><path d="M1075.5 771.5L1079.5 786.5" fill="none"/><rect x="1082" y="806" width="2" height="2" stroke="none"/><path d="M1079.5 786.5L1083.5 807.5" fill="none"/><rect x="1086" y="839" width="2" height="2" stroke="none"/><path d="M1083.5 807.5L1087.5 840.5" fill="none"/><rect x="1090" y="883" width="2" height="2" stroke="none"/><path d="M1087.5 840.5L1091.5 884.5" fill="none"/><rect x="1094" y="907" width="2" height="2" stroke="none"/><path d="M1091.5 884.5L1095.5 908.5" fill="none"/><rect x="1098" y="930" width="2" height="2" stroke="none"/><path d="M1095.5 908.5L1099.5 931.5" fill="none"/></g>
<path d="M890 823h6v1h-1v2h-1v2h-2v-2h-1v-2h-1z" fill="#ff0000" shape-rendering="crispEdges"/>
<path d="M898 815h6v1h-1v2h-1v2h-2v-2h-1v-2h-1z" fill="#00ff00" shape-rendering="crispEdges"/>
<path d="M1096 537h6v1h-1v2h-1v2h-2v-2h-1v-2h-1z" fill="#0000ff" shape-rendering="crispEdges"/>
<path d="M890 583h6v1h-1v2h-1v2h-2v-2h-1v-2h-1z" fill="#ff0000" shape-rendering="crispEdges"/>
<path d="M898 584h6v1h-1v2h-1v2h-2v-2h-1v-2h-1z" fill="#00ff00" shape-rendering="crispEdges"/>
<path d="M1096 928h6v1h-1v2h-1v2h-2v-2h-1v-2h-1z" fill="#0000ff" shape-rendering="crispEdges"/>
</svg>
<span class="t" style="top:532px;left:661px;letter-spacing:-0.113px;">149.0</span>
<span class="t" style="top:588px;left:661px;letter-spacing:-0.113px;">131.0</span>
<span class="t" style="top:644px;left:661px;letter-spacing:0.050px;">113.0</span>
<span class="t" style="top:700px;left:661px;letter-spacing:-0.109px;">95.0</span>
<span class="t" style="top:756px;left:661px;letter-spacing:-0.109px;">77.0</span>
<span class="t" style="top:812px;left:661px;letter-spacing:-0.109px;">59.0</span>
<span class="t" style="top:868px;left:661px;letter-spacing:-0.109px;">41.0</span>
<span class="t" style="top:920px;left:661px;letter-spacing:-0.125px;">23</span>
<span class="t" style="top:532px;left:1107px;letter-spacing:-0.109px;">46.0</span>
<span class="t" style="top:588px;left:1107px;letter-spacing:-0.109px;">40.7</span>
<span class="t" style="top:644px;left:1107px;letter-spacing:-0.109px;">35.4</span>
<span class="t" style="top:700px;left:1107px;letter-spacing:-0.109px;">30.1</span>
<span class="t" style="top:756px;left:1107px;letter-spacing:-0.109px;">24.9</span>
<span class="t" style="top:812px;left:1107px;letter-spacing:-0.109px;">19.6</span>
<span class="t" style="top:868px;left:1107px;letter-spacing:-0.109px;">14.3</span>
<span class="t" style="top:920px;left:1107px;">9</span>
<span class="t" style="top:935px;left:683px;letter-spacing:-0.200px;">3500k</span>
<span class="t" style="top:935px;left:815px;letter-spacing:-0.200px;">3600k</span>
<span class="t" style="top:935px;left:947px;letter-spacing:-0.200px;">3700k</span>
<span class="t" style="top:935px;left:1079px;letter-spacing:-0.200px;">3800k</span>
<span class="t" style="top:513px;left:667px;">R</span>
<div style="left:677px;top:517px;width:7px;height:2px;background:#a08c14;"></div>
<span class="t" style="top:513px;left:707px;letter-spacing:-0.048px;">S11 R+jX (Ω)</span>
<span class="t" style="top:513px;left:700px;width:400px;text-align:center;letter-spacing:-0.135px;">80m</span>
<div style="left:1098px;top:517px;width:7px;height:2px;background:#14a08c;"></div>
<span class="t" style="top:513px;left:1108px;">X</span>
<svg style="left:1150px;top:509px;background:#fff" width="486" height="442" viewBox="1150 509 486 442">
<g stroke="#c0c0c0" stroke-width="1" shape-rendering="crispEdges"><line x1="1180.5" y1="534" x2="1180.5" y2="937"/><line x1="1289.5" y1="539" x2="1289.5" y2="937"/><line x1="1398.5" y1="539" x2="1398.5" y2="937"/><line x1="1507.5" y1="539" x2="1507.5" y2="937"/><line x1="1616.5" y1="539" x2="1616.5" y2="937"/><line x1="1175" y1="539.5" x2="1617" y2="539.5"/><line x1="1175" y1="604.5" x2="1617" y2="604.5"/><line x1="1175" y1="670.5" x2="1617" y2="670.5"/><line x1="1175" y1="735.5" x2="1617" y2="735.5"/><line x1="1175" y1="800.5" x2="1617" y2="800.5"/><line x1="1175" y1="866.5" x2="1617" y2="866.5"/><line x1="1175" y1="931.5" x2="1617" y2="931.5"/></g>
<g stroke="rgba(160,140,20,0.5)" fill="rgba(160,140,20,0.5)" stroke-width="1" shape-rendering="crispEdges"><rect x="1179" y="677" width="2" height="2" stroke="none"/><rect x="1183" y="677" width="2" height="2" stroke="none"/><path d="M1180.5 678.5L1184.5 678.5" fill="none"/><rect x="1188" y="681" width="2" height="2" stroke="none"/><path d="M1184.5 678.5L1189.5 682.5" fill="none"/><rect x="1192" y="687" width="2" height="2" stroke="none"/><path d="M1189.5 682.5L1193.5 688.5" fill="none"/><rect x="1196" y="691" width="2" height="2" stroke="none"/><path d="M1193.5 688.5L1197.5 692.5" fill="none"/><rect x="1201" y="694" width="2" height="2" stroke="none"/><path d="M1197.5 692.5L1202.5 695.5" fill="none"/><rect x="1205" y="690" width="2" height="2" stroke="none"/><path d="M1202.5 695.5L1206.5 691.5" fill="none"/><rect x="1210" y="691" width="2" height="2" stroke="none"/><path d="M1206.5 691.5L1211.5 692.5" fill="none"/><rect x="1214" y="694" width="2" height="2" stroke="none"/><path d="M1211.5 692.5L1215.5 695.5" fill="none"/><rect x="1218" y="699" width="2" height="2" stroke="none"/><path d="M1215.5 695.5L1219.5 700.5" fill="none"/><rect x="1223" y="702" width="2" height="2" stroke="none"/><path d="M1219.5 700.5L1224.5 703.5" fill="none"/><rect x="1227" y="705" width="2" height="2" stroke="none"/><path d="M1224.5 703.5L1228.5 706.5" fill="none"/><rect x="1231" y="700" width="2" height="2" stroke="none"/><path d="M1228.5 706.5L1232.5 701.5" fill="none"/><rect x="1236" y="700" width="2" height="2" stroke="none"/><path d="M1232.5 701.5L1237.5 701.5" fill="none"/><rect x="1240" y="706" width="2" height="2" stroke="none"/><path d="M1237.5 701.5L1241.5 707.5" fill="none"/><rect x="1244" y="710" width="2" height="2" stroke="none"/><path d="M1241.5 707.5L1245.5 711.5" fill="none"/><rect x="1249" y="712" width="2" height="2" stroke="none"/><path d="M1245.5 711.5L1250.5 713.5" fill="none"/><rect x="1253" y="706" width="2" height="2" stroke="none"/><path d="M1250.5 713.5L1254.5 707.5" fill="none"/><rect x="1257" y="708" width="2" height="2" stroke="none"/><path d="M1254.5 707.5L1258.5 709.5" fill="none"/><rect x="1262" y="710" width="2" height="2" stroke="none"/><path d="M1258.5 709.5L1263.5 711.5" fill="none"/><rect x="1266" y="714" width="2" height="2" stroke="none"/><path d="M1263.5 711.5L1267.5 715.5" fill="none"/><rect x="1271" y="715" width="2" height="2" stroke="none"/><path d="M1267.5 715.5L1272.5 716.5" fill="none"/><rect x="1275" y="715" width="2" height="2" stroke="none"/><path d="M1272.5 716.5L1276.5 716.5" fill="none"/><rect x="1279" y="711" width="2" height="2" stroke="none"/><path d="M1276.5 716.5L1280.5 712.5" fill="none"/><rect x="1284" y="711" width="2" height="2" stroke="none"/><path d="M1280.5 712.5L1285.5 712.5" fill="none"/><rect x="1288" y="714" width="2" height="2" stroke="none"/><path d="M1285.5 712.5L1289.5 715.5" fill="none"/><rect x="1292" y="717" width="2" height="2" stroke="none"/><path d="M1289.5 715.5L1293.5 718.5" fill="none"/><rect x="1297" y="715" width="2" height="2" stroke="none"/><path d="M1293.5 718.5L1298.5 716.5" fill="none"/><rect x="1301" y="717" width="2" height="2" stroke="none"/><path d="M1298.5 716.5L1302.5 718.5" fill="none"/><rect x="1305" y="714" width="2" height="2" stroke="none"/><path d="M1302.5 718.5L1306.5 715.5" fill="none"/><rect x="1310" y="714" width="2" height="2" stroke="none"/><path d="M1306.5 715.5L1311.5 715.5" fill="none"/><rect x="1314" y="715" width="2" height="2" stroke="none"/><path d="M1311.5 715.5L1315.5 716.5" fill="none"/><rect x="1319" y="716" width="2" height="2" stroke="none"/><path d="M1315.5 716.5L1320.5 717.5" fill="none"/><rect x="1323" y="716" width="2" height="2" stroke="none"/><path d="M1320.5 717.5L1324.5 717.5" fill="none"/><rect x="1327" y="714" width="2" height="2" stroke="none"/><path d="M1324.5 717.5L1328.5 715.5" fill="none"/><rect x="1332" y="711" width="2" height="2" stroke="none"/><path d="M1328.5 715.5L1333.5 712.5" fill="none"/><rect x="1336" y="712" width="2" height="2" stroke="none"/><path d="M1333.5 712.5L1337.5 713.5" fill="none"/><rect x="1340" y="712" width="2" height="2" stroke="none"/><path d="M1337.5 713.5L1341.5 713.5" fill="none"/><rect x="1345" y="713" width="2" height="2" stroke="none"/><path d="M1341.5 713.5L1346.5 714.5" fill="none"/><rect x="1349" y="715" width="2" height="2" stroke="none"/><path d="M1346.5 714.5L1350.5 716.5" fill="none"/><rect x="1353" y="713" width="2" height="2" stroke="none"/><path d="M1350.5 716.5L1354.5 714.5" fill="none"/><rect x="1358" y="710" width="2" height="2" stroke="none"/><path d="M1354.5 714.5L1359.5 711.5" fill="none"/><rect x="1362" y="707" width="2" height="2" stroke="none"/><path d="M1359.5 711.5L1363.5 708.5" fill="none"/><rect x="1366" y="709" width="2" height="2" stroke="none"/><path d="M1363.5 708.5L1367.5 710.5" fill="none"/><rect x="1371" y="711" width="2" height="2" stroke="none"/><path d="M1367.5 710.5L1372.5 712.5" fill="none"/><rect x="1375" y="710" width="2" height="2" stroke="none"/><path d="M1372.5 712.5L1376.5 711.5" fill="none"/><rect x="1380" y="705" width="2" height="2" stroke="none"/><path d="M1376.5 711.5L1381.5 706.5" fill="none"/><rect x="1384" y="700" width="2" height="2" stroke="none"/><path d="M1381.5 706.5L1385.5 701.5" fill="none"/><rect x="1388" y="702" width="2" height="2" stroke="none"/><path d="M1385.5 701.5L1389.5 703.5" fill="none"/><rect x="1393" y="705" width="2" height="2" stroke="none"/><path d="M1389.5 703.5L1394.5 706.5" fill="none"/><rect x="1397" y="706" width="2" height="2" stroke="none"/><path d="M1394.5 706.5L1398.5 707.5" fill="none"/><rect x="1401" y="707" width="2" height="2" stroke="none"/><path d="M1398.5 707.5L1402.5 708.5" fill="none"/><rect x="1406" y="699" width="2" height="2" stroke="none"/><path d="M1402.5 708.5L1407.5 700.5" fill="none"/><rect x="1410" y="696" width="2" height="2" stroke="none"/><path d="M1407.5 700.5L1411.5 697.5" fill="none"/><rect x="1414" y="698" width="2" height="2" stroke="none"/><path d="M1411.5 697.5L1415.5 699.5" fill="none"/><rect x="1419" y="698" width="2" height="2" stroke="none"/><path d="M1415.5 699.5L1420.5 699.5" fill="none"/><rect x="1423" y="699" width="2" height="2" stroke="none"/><path d="M1420.5 699.5L1424.5 700.5" fill="none"/><rect x="1428" y="691" width="2" height="2" stroke="none"/><path d="M1424.5 700.5L1429.5 692.5" fill="none"/><rect x="1432" y="687" width="2" height="2" stroke="none"/><path d="M1429.5 692.5L1433.5 688.5" fill="none"/><rect x="1436" y="686" width="2" height="2" stroke="none"/><path d="M1433.5 688.5L1437.5 687.5" fill="none"/><rect x="1441" y="692" width="2" height="2" stroke="none"/><path d="M1437.5 687.5L1442.5 693.5" fill="none"/><rect x="1445" y="691" width="2" height="2" stroke="none"/><path d="M1442.5 693.5L1446.5 692.5" fill="none"/><rect x="1449" y="691" width="2" height="2" stroke="none"/><path d="M1446.5 692.5L1450.5 692.5" fill="none"/><rect x="1454" y="681" width="2" height="2" stroke="none"/><path d="M1450.5 692.5L1455.5 682.5" fill="none"/><rect x="1458" y="678" width="2" height="2" stroke="none"/><path d="M1455.5 682.5L1459.5 679.5" fill="none"/><rect x="1462" y="678" width="2" height="2" stroke="none"/><path d="M1459.5 679.5L1463.5 679.5" fill="none"/><rect x="1467" y="680" width="2" height="2" stroke="none"/><path d="M1463.5 679.5L1468.5 681.5" fill="none"/><rect x="1471" y="679" width="2" height="2" stroke="none"/><path d="M1468.5 681.5L1472.5 680.5" fill="none"/><rect x="1475" y="674" width="2" height="2" stroke="none"/><path d="M1472.5 680.5L1476.5 675.5" fill="none"/><rect x="1480" y="664" width="2" height="2" stroke="none"/><path d="M1476.5 675.5L1481.5 665.5" fill="none"/><rect x="1484" y="664" width="2" height="2" stroke="none"/><path d="M1481.5 665.5L1485.5 665.5" fill="none"/><rect x="1489" y="666" width="2" height="2" stroke="none"/><path d="M1485.5 665.5L1490.5 667.5" fill="none"/><rect x="1493" y="665" width="2" height="2" stroke="none"/><path d="M1490.5 667.5L1494.5 666.5" fill="none"/><rect x="1497" y="661" width="2" height="2" stroke="none"/><path d="M1494.5 666.5L1498.5 662.5" fill="none"/><rect x="1502" y="656" width="2" height="2" stroke="none"/><path d="M1498.5 662.5L1503.5 657.5" fill="none"/><rect x="1506" y="650" width="2" height="2" stroke="none"/><path d="M1503.5 657.5L1507.5 651.5" fill="none"/><rect x="1510" y="647" width="2" height="2" stroke="none"/><path d="M1507.5 651.5L1511.5 648.5" fill="none"/><rect x="1515" y="650" width="2" height="2" stroke="none"/><path d="M1511.5 648.5L1516.5 651.5" fill="none"/><rect x="1519" y="642" width="2" height="2" stroke="none"/><path d="M1516.5 651.5L1520.5 643.5" fill="none"/><rect x="1523" y="641" width="2" height="2" stroke="none"/><path d="M1520.5 643.5L1524.5 642.5" fill="none"/><rect x="1528" y="635" width="2" height="2" stroke="none"/><path d="M1524.5 642.5L1529.5 636.5" fill="none"/><rect x="1532" y="629" width="2" height="2" stroke="none"/><path d="M1529.5 636.5L1533.5 630.5" fill="none"/><rect x="1537" y="626" width="2" height="2" stroke="none"/><path d="M1533.5 630.5L1538.5 627.5" fill="none"/><rect x="1541" y="623" width="2" height="2" stroke="none"/><path d="M1538.5 627.5L1542.5 624.5" fill="none"/><rect x="1545" y="618" width="2" height="2" stroke="none"/><path d="M1542.5 624.5L1546.5 619.5" fill="none"/><rect x="1550" y="618" width="2" height="2" stroke="none"/><path d="M1546.5 619.5L1551.5 619.5" fill="none"/><rect x="1554" y="610" width="2" height="2" stroke="none"/><path d="M1551.5 619.5L1555.5 611.5" fill="none"/><rect x="1558" y="604" width="2" height="2" stroke="none"/><path d="M1555.5 611.5L1559.5 605.5" fill="none"/><rect x="1563" y="597" width="2" height="2" stroke="none"/><path d="M1559.5 605.5L1564.5 598.5" fill="none"/><rect x="1567" y="597" width="2" height="2" stroke="none"/><path d="M1564.5 598.5L1568.5 598.5" fill="none"/><rect x="1571" y="596" width="2" height="2" stroke="none"/><path d="M1568.5 598.5L1572.5 597.5" fill="none"/><rect x="1576" y="592" width="2" height="2" stroke="none"/><path d="M1572.5 597.5L1577.5 593.5" fill="none"/><rect x="1580" y="578" width="2" height="2" stroke="none"/><path d="M1577.5 593.5L1581.5 579.5" fill="none"/><rect x="1584" y="573" width="2" height="2" stroke="none"/><path d="M1581.5 579.5L1585.5 574.5" fill="none"/><rect x="1589" y="571" width="2" height="2" stroke="none"/><path d="M1585.5 574.5L1590.5 572.5" fill="none"/><rect x="1593" y="569" width="2" height="2" stroke="none"/><path d="M1590.5 572.5L1594.5 570.5" fill="none"/><rect x="1598" y="565" width="2" height="2" stroke="none"/><path d="M1594.5 570.5L1599.5 566.5" fill="none"/><rect x="1602" y="558" width="2" height="2" stroke="none"/><path d="M1599.5 566.5L1603.5 559.5" fill="none"/><rect x="1606" y="545" width="2" height="2" stroke="none"/><path d="M1603.5 559.5L1607.5 546.5" fill="none"/><rect x="1611" y="540" width="2" height="2" stroke="none"/><path d="M1607.5 546.5L1612.5 541.5" fill="none"/><rect x="1615" y="541" width="2" height="2" stroke="none"/><path d="M1612.5 541.5L1616.5 542.5" fill="none"/></g>
<path d="M1386 700h6v1h-1v2h-1v2h-2v-2h-1v-2h-1z" fill="#ff0000" shape-rendering="crispEdges"/>
<path d="M1395 704h6v1h-1v2h-1v2h-2v-2h-1v-2h-1z" fill="#00ff00" shape-rendering="crispEdges"/>
<path d="M1613 539h6v1h-1v2h-1v2h-2v-2h-1v-2h-1z" fill="#0000ff" shape-rendering="crispEdges"/>
</svg>
<span class="t" style="top:533px;left:1153px;">3</span>
<span class="t" style="top:596px;left:1153px;letter-spacing:-0.109px;">2.67</span>
<span class="t" style="top:662px;left:1153px;letter-spacing:-0.109px;">2.33</span>
<span class="t" style="top:727px;left:1153px;letter-spacing:-0.104px;">2.0</span>
<span class="t" style="top:792px;left:1153px;letter-spacing:-0.109px;">1.67</span>
<span class="t" style="top:858px;left:1153px;letter-spacing:-0.109px;">1.33</span>
<span class="t" style="top:923px;left:1153px;letter-spacing:-0.104px;">1.0</span>
<span class="t" style="top:935px;left:1160px;letter-spacing:-0.200px;">3500k</span>
<span class="t" style="top:935px;left:1269px;letter-spacing:-0.200px;">3575k</span>
<span class="t" style="top:935px;left:1378px;letter-spacing:-0.200px;">3650k</span>
<span class="t" style="top:935px;left:1487px;letter-spacing:-0.200px;">3725k</span>
<span class="t" style="top:935px;left:1596px;letter-spacing:-0.200px;">3800k</span>
<span class="t" style="top:513px;left:1152px;letter-spacing:-0.480px;">S11 VSWR</span>
<span class="t" style="top:513px;left:1192px;width:400px;text-align:center;letter-spacing:-0.135px;">80m</span>
<svg style="left:0;top:790px" width="300" height="140" viewBox="0 790 300 140"><ellipse cx="150.3" cy="862.8" rx="131.4" ry="53.7" fill="none" stroke="#ed1c24" stroke-width="4.6"/></svg>
</body></html>
